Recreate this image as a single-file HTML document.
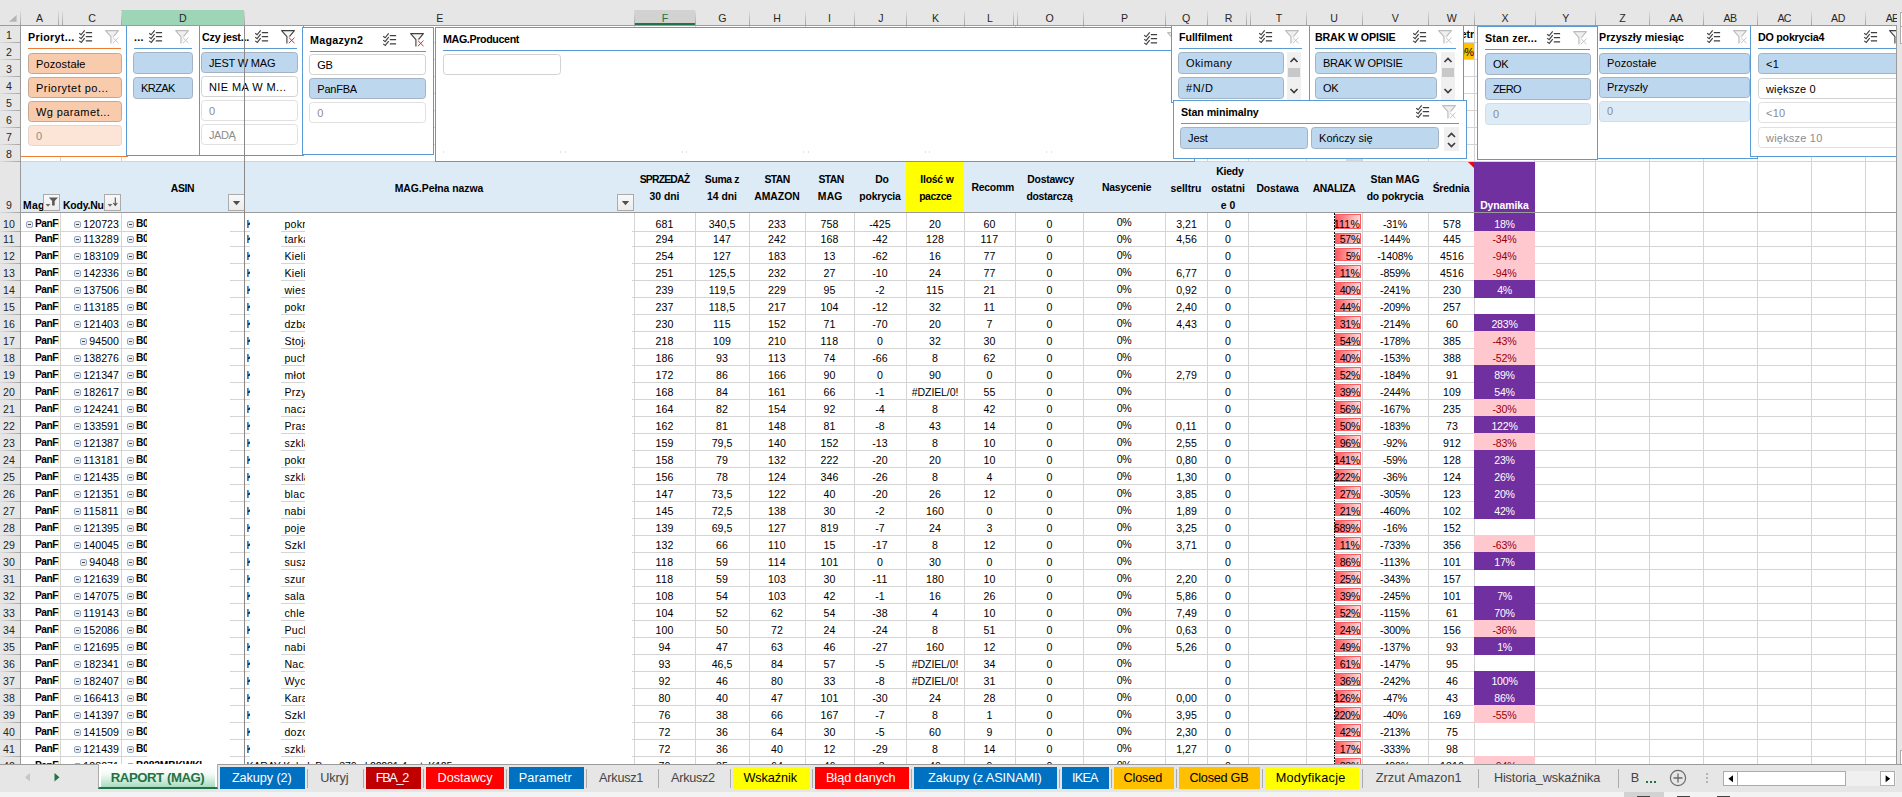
<!DOCTYPE html>
<html lang="pl"><head><meta charset="utf-8"><title>RAPORT (MAG)</title>
<style>
html,body{margin:0;padding:0}
body{width:1902px;height:797px;overflow:hidden;background:#e6e6e6;font-family:"Liberation Sans",sans-serif;font-size:10.6px;color:#000;position:relative}
#app{position:absolute;left:0;top:0;width:1902px;height:797px;overflow:hidden;background:#e6e6e6}
#app div{position:absolute;box-sizing:border-box;white-space:nowrap}
.c{text-align:center;overflow:hidden}
.r{text-align:right;overflow:hidden}
.l{text-align:left;overflow:hidden}
.b{font-weight:bold}
.hl,.vl{background:#d4d4d4}
.ch{color:#262626;font-size:10.6px;text-align:center;line-height:15px}
.rh{color:#262626;font-size:10.6px;text-align:center}
.hd{font-weight:bold;text-align:center;font-size:10.4px;overflow:hidden}
.slh{font-weight:bold;font-size:10.7px;line-height:14px;overflow:hidden}
.sb{border:1px solid #a3b3c4;border-radius:3.5px;background:#bdd7ee;font-size:11px;padding-left:7px;overflow:hidden}
.sb.w{background:#fff;border-color:#d2d2d2}
.sb.g{background:#fff;border-color:#e0e0e0;color:#8c8c8c}
.sb.lb{background:#ddebf7;border-color:#d3dde8;color:#8c8c8c}
.sb.o{background:#f8cbad;border-color:#c4a896}
.sb.lo{background:#fce4d6;border-color:#e4d6ce;color:#8c8c8c}
.tab{font-size:12.7px;line-height:21px;text-align:center;color:#fff;overflow:hidden}
.tsep{background:#ababab}
.mb{border:1px solid #93a5c4;border-radius:2px;background:#ebebeb}
.mb i{position:absolute;left:1px;top:2px;width:3px;height:1px;background:#444;display:block}
.dd{background:#fff;border:1px solid #ababab}
svg{position:absolute;overflow:visible}

</style></head><body><div id="app">
<div style="left:21px;top:26px;width:1875px;height:738px;background:#fff"></div>
<div style="left:21px;top:161px;width:1453px;height:51px;background:#ddebf7"></div>
<div style="left:906px;top:161px;width:58px;height:51px;background:#ffff00"></div>
<div style="left:1474px;top:161px;width:61px;height:51px;background:#7030a0"></div>
<div class="hl" style="left:21px;top:231px;width:1875px;height:1px;"></div>
<div class="hl" style="left:21px;top:246px;width:1875px;height:1px;"></div>
<div class="hl" style="left:21px;top:263px;width:1875px;height:1px;"></div>
<div class="hl" style="left:21px;top:280px;width:1875px;height:1px;"></div>
<div class="hl" style="left:21px;top:297px;width:1875px;height:1px;"></div>
<div class="hl" style="left:21px;top:314px;width:1875px;height:1px;"></div>
<div class="hl" style="left:21px;top:331px;width:1875px;height:1px;"></div>
<div class="hl" style="left:21px;top:348px;width:1875px;height:1px;"></div>
<div class="hl" style="left:21px;top:365px;width:1875px;height:1px;"></div>
<div class="hl" style="left:21px;top:382px;width:1875px;height:1px;"></div>
<div class="hl" style="left:21px;top:399px;width:1875px;height:1px;"></div>
<div class="hl" style="left:21px;top:416px;width:1875px;height:1px;"></div>
<div class="hl" style="left:21px;top:433px;width:1875px;height:1px;"></div>
<div class="hl" style="left:21px;top:450px;width:1875px;height:1px;"></div>
<div class="hl" style="left:21px;top:467px;width:1875px;height:1px;"></div>
<div class="hl" style="left:21px;top:484px;width:1875px;height:1px;"></div>
<div class="hl" style="left:21px;top:501px;width:1875px;height:1px;"></div>
<div class="hl" style="left:21px;top:518px;width:1875px;height:1px;"></div>
<div class="hl" style="left:21px;top:535px;width:1875px;height:1px;"></div>
<div class="hl" style="left:21px;top:552px;width:1875px;height:1px;"></div>
<div class="hl" style="left:21px;top:569px;width:1875px;height:1px;"></div>
<div class="hl" style="left:21px;top:586px;width:1875px;height:1px;"></div>
<div class="hl" style="left:21px;top:603px;width:1875px;height:1px;"></div>
<div class="hl" style="left:21px;top:620px;width:1875px;height:1px;"></div>
<div class="hl" style="left:21px;top:637px;width:1875px;height:1px;"></div>
<div class="hl" style="left:21px;top:654px;width:1875px;height:1px;"></div>
<div class="hl" style="left:21px;top:671px;width:1875px;height:1px;"></div>
<div class="hl" style="left:21px;top:688px;width:1875px;height:1px;"></div>
<div class="hl" style="left:21px;top:705px;width:1875px;height:1px;"></div>
<div class="hl" style="left:21px;top:722px;width:1875px;height:1px;"></div>
<div class="hl" style="left:21px;top:739px;width:1875px;height:1px;"></div>
<div class="hl" style="left:21px;top:756px;width:1875px;height:1px;"></div>
<div class="hl" style="left:21px;top:42px;width:1875px;height:1px;"></div>
<div class="hl" style="left:21px;top:59px;width:1875px;height:1px;"></div>
<div class="hl" style="left:21px;top:76px;width:1875px;height:1px;"></div>
<div class="hl" style="left:21px;top:93px;width:1875px;height:1px;"></div>
<div class="hl" style="left:21px;top:110px;width:1875px;height:1px;"></div>
<div class="hl" style="left:21px;top:127px;width:1875px;height:1px;"></div>
<div class="hl" style="left:21px;top:144px;width:1875px;height:1px;"></div>
<div class="hl" style="left:21px;top:161px;width:1875px;height:1px;"></div>
<div class="vl" style="left:60px;top:26px;width:1px;height:136px;"></div>
<div class="vl" style="left:60px;top:213px;width:1px;height:551px;"></div>
<div class="vl" style="left:121px;top:26px;width:1px;height:136px;"></div>
<div class="vl" style="left:121px;top:213px;width:1px;height:551px;"></div>
<div class="vl" style="left:244px;top:26px;width:1px;height:136px;"></div>
<div class="vl" style="left:244px;top:213px;width:1px;height:551px;"></div>
<div class="vl" style="left:634px;top:26px;width:1px;height:136px;"></div>
<div class="vl" style="left:634px;top:213px;width:1px;height:551px;"></div>
<div class="vl" style="left:695px;top:26px;width:1px;height:136px;"></div>
<div class="vl" style="left:695px;top:213px;width:1px;height:551px;"></div>
<div class="vl" style="left:749px;top:26px;width:1px;height:136px;"></div>
<div class="vl" style="left:749px;top:213px;width:1px;height:551px;"></div>
<div class="vl" style="left:805px;top:26px;width:1px;height:136px;"></div>
<div class="vl" style="left:805px;top:213px;width:1px;height:551px;"></div>
<div class="vl" style="left:854px;top:26px;width:1px;height:136px;"></div>
<div class="vl" style="left:854px;top:213px;width:1px;height:551px;"></div>
<div class="vl" style="left:906px;top:26px;width:1px;height:136px;"></div>
<div class="vl" style="left:906px;top:213px;width:1px;height:551px;"></div>
<div class="vl" style="left:964px;top:26px;width:1px;height:136px;"></div>
<div class="vl" style="left:964px;top:213px;width:1px;height:551px;"></div>
<div class="vl" style="left:1015px;top:26px;width:1px;height:136px;"></div>
<div class="vl" style="left:1015px;top:213px;width:1px;height:551px;"></div>
<div class="vl" style="left:1083px;top:26px;width:1px;height:136px;"></div>
<div class="vl" style="left:1083px;top:213px;width:1px;height:551px;"></div>
<div class="vl" style="left:1165px;top:26px;width:1px;height:136px;"></div>
<div class="vl" style="left:1165px;top:213px;width:1px;height:551px;"></div>
<div class="vl" style="left:1207px;top:26px;width:1px;height:136px;"></div>
<div class="vl" style="left:1207px;top:213px;width:1px;height:551px;"></div>
<div class="vl" style="left:1248px;top:26px;width:1px;height:136px;"></div>
<div class="vl" style="left:1248px;top:213px;width:1px;height:551px;"></div>
<div class="vl" style="left:1306px;top:26px;width:1px;height:136px;"></div>
<div class="vl" style="left:1306px;top:213px;width:1px;height:551px;"></div>
<div class="vl" style="left:1362px;top:26px;width:1px;height:136px;"></div>
<div class="vl" style="left:1362px;top:213px;width:1px;height:551px;"></div>
<div class="vl" style="left:1428px;top:26px;width:1px;height:136px;"></div>
<div class="vl" style="left:1428px;top:213px;width:1px;height:551px;"></div>
<div class="vl" style="left:1474px;top:26px;width:1px;height:136px;"></div>
<div class="vl" style="left:1474px;top:213px;width:1px;height:551px;"></div>
<div class="vl" style="left:1534px;top:26px;width:1px;height:136px;"></div>
<div class="vl" style="left:1534px;top:213px;width:1px;height:551px;"></div>
<div class="vl" style="left:1595px;top:26px;width:1px;height:136px;"></div>
<div class="vl" style="left:1595px;top:213px;width:1px;height:551px;"></div>
<div class="vl" style="left:1595px;top:162px;width:1px;height:50px;"></div>
<div class="vl" style="left:1649px;top:26px;width:1px;height:136px;"></div>
<div class="vl" style="left:1649px;top:213px;width:1px;height:551px;"></div>
<div class="vl" style="left:1649px;top:162px;width:1px;height:50px;"></div>
<div class="vl" style="left:1703px;top:26px;width:1px;height:136px;"></div>
<div class="vl" style="left:1703px;top:213px;width:1px;height:551px;"></div>
<div class="vl" style="left:1703px;top:162px;width:1px;height:50px;"></div>
<div class="vl" style="left:1757px;top:26px;width:1px;height:136px;"></div>
<div class="vl" style="left:1757px;top:213px;width:1px;height:551px;"></div>
<div class="vl" style="left:1757px;top:162px;width:1px;height:50px;"></div>
<div class="vl" style="left:1811px;top:26px;width:1px;height:136px;"></div>
<div class="vl" style="left:1811px;top:213px;width:1px;height:551px;"></div>
<div class="vl" style="left:1811px;top:162px;width:1px;height:50px;"></div>
<div class="vl" style="left:1865px;top:26px;width:1px;height:136px;"></div>
<div class="vl" style="left:1865px;top:213px;width:1px;height:551px;"></div>
<div class="vl" style="left:1865px;top:162px;width:1px;height:50px;"></div>
<div style="left:1429px;top:27px;width:45px;height:15px;font-weight:bold;line-height:15px;text-align:right;overflow:hidden;letter-spacing:-0.11px;">Parametr</div>
<div style="left:1429px;top:43px;width:45px;height:16px;background:#ffc000;line-height:19px;text-align:right;overflow:hidden">30%</div>
<div class="hd" style="left:111px;top:181.05px;width:143px;height:16.7px;line-height:16.7px;letter-spacing:-0.34px;">ASIN</div>
<div class="hd" style="left:234px;top:181.05px;width:410px;height:16.7px;line-height:16.7px;letter-spacing:-0.02px;">MAG.Pełna nazwa</div>
<div class="hd" style="left:624px;top:171.9px;width:81px;height:16.7px;line-height:16.7px;letter-spacing:-0.81px;">SPRZEDAŻ</div>
<div class="hd" style="left:624px;top:188.6px;width:81px;height:16.7px;line-height:16.7px;">30 dni</div>
<div class="hd" style="left:685px;top:171.9px;width:74px;height:16.7px;line-height:16.7px;letter-spacing:-0.32px;">Suma z</div>
<div class="hd" style="left:685px;top:188.6px;width:74px;height:16.7px;line-height:16.7px;">14 dni</div>
<div class="hd" style="left:739px;top:171.9px;width:76px;height:16.7px;line-height:16.7px;letter-spacing:-0.60px;">STAN</div>
<div class="hd" style="left:739px;top:188.6px;width:76px;height:16.7px;line-height:16.7px;">AMAZON</div>
<div class="hd" style="left:796.5px;top:171.9px;width:69px;height:16.7px;line-height:16.7px;letter-spacing:-0.60px;">STAN</div>
<div class="hd" style="left:795.7px;top:188.6px;width:69px;height:16.7px;line-height:16.7px;letter-spacing:0.14px;">MAG</div>
<div class="hd" style="left:846px;top:171.9px;width:72px;height:16.7px;line-height:16.7px;letter-spacing:-0.08px;">Do</div>
<div class="hd" style="left:844px;top:188.6px;width:72px;height:16.7px;line-height:16.7px;letter-spacing:-0.17px;">pokrycia</div>
<div class="hd" style="left:897.9px;top:171.9px;width:78px;height:16.7px;line-height:16.7px;letter-spacing:-0.20px;">Ilość w</div>
<div class="hd" style="left:896.3px;top:188.6px;width:78px;height:16.7px;line-height:16.7px;letter-spacing:-0.41px;">paczce</div>
<div class="hd" style="left:957.2px;top:180.25px;width:71px;height:16.7px;line-height:16.7px;letter-spacing:-0.22px;">Recomm</div>
<div class="hd" style="left:1007.2px;top:171.9px;width:87px;height:16.7px;line-height:16.7px;letter-spacing:-0.19px;">Dostawcy</div>
<div class="hd" style="left:1006px;top:188.6px;width:87px;height:16.7px;line-height:16.7px;letter-spacing:-0.26px;">dostarczą</div>
<div class="hd" style="left:1075.7px;top:180.25px;width:102px;height:16.7px;line-height:16.7px;letter-spacing:-0.24px;">Nasycenie</div>
<div class="hd" style="left:1155px;top:181.05px;width:62px;height:16.7px;line-height:16.7px;letter-spacing:-0.05px;">selltru</div>
<div class="hd" style="left:1198.9px;top:162.95px;width:62px;height:17.1px;line-height:17.1px;letter-spacing:-0.25px;">Kiedy</div>
<div class="hd" style="left:1197px;top:180.05px;width:62px;height:17.1px;line-height:17.1px;letter-spacing:-0.05px;">ostatni</div>
<div class="hd" style="left:1197px;top:197.15px;width:62px;height:17.1px;line-height:17.1px;">e 0</div>
<div class="hd" style="left:1239px;top:181.05px;width:77px;height:16.7px;line-height:16.7px;letter-spacing:-0.07px;">Dostawa</div>
<div class="hd" style="left:1296px;top:181.05px;width:76px;height:16.7px;line-height:16.7px;letter-spacing:-0.42px;">ANALIZA</div>
<div class="hd" style="left:1352px;top:171.9px;width:86px;height:16.7px;line-height:16.7px;letter-spacing:-0.10px;">Stan MAG</div>
<div class="hd" style="left:1352px;top:188.6px;width:86px;height:16.7px;line-height:16.7px;letter-spacing:-0.15px;">do pokrycia</div>
<div class="hd" style="left:1418px;top:181.05px;width:66px;height:16.7px;line-height:16.7px;letter-spacing:-0.20px;">Średnia</div>
<div class="hd" style="left:1464px;top:197.9px;width:81px;height:16.7px;color:#fff;line-height:16.7px;letter-spacing:-0.05px;">Dynamika</div>
<div style="left:23px;top:198.2px;width:22px;height:16px;font-weight:bold;font-size:10.4px;line-height:16px;overflow:hidden;letter-spacing:0.27px;">Mag</div>
<div style="left:63px;top:198.2px;width:42px;height:16px;font-weight:bold;font-size:10.4px;line-height:16px;overflow:hidden;letter-spacing:-0.17px;">Kody.Nu</div>
<div class="dd" style="left:43px;top:194px;width:17px;height:17px;background:linear-gradient(#f8f8f8,#ececec);"><svg width="17" height="17" viewBox="0 0 17 17" style="left:-1px;top:-1px"><path d="M2.6 10h4.8l-2.4 2.8z" fill="#6a6a6a"/><path d="M5.8 3.6h9.2l-3.3 3.3v4.6h-2.6v-4.6z" fill="#5a5a5a"/></svg></div>
<div class="dd" style="left:104px;top:194px;width:17px;height:17px;background:linear-gradient(#f8f8f8,#ececec);"><svg width="17" height="17" viewBox="0 0 17 17" style="left:-1px;top:-1px"><path d="M3.6 10h4.8l-2.4 2.8z" fill="#6a6a6a"/><path d="M11.3 3.6v7.6M9.3 9l2 2.3 2-2.3" stroke="#505050" stroke-width="1.1" fill="none"/></svg></div>
<div class="dd" style="left:228px;top:194px;width:17px;height:17px;background:linear-gradient(#f8f8f8,#ececec);"><svg width="17" height="17" viewBox="0 0 17 17" style="left:-1px;top:-1px"><path d="M4.8 7h7.4l-3.7 4.2z" fill="#505050"/></svg></div>
<div class="dd" style="left:617px;top:194px;width:17px;height:17px;background:linear-gradient(#f8f8f8,#ececec);"><svg width="17" height="17" viewBox="0 0 17 17" style="left:-1px;top:-1px"><path d="M4.8 7h7.4l-3.7 4.2z" fill="#505050"/></svg></div>
<svg width="6" height="6" viewBox="0 0 6 6" style="left:1468px;top:162px"><path d="M0 0h6v6z" fill="#ff0000"/></svg>
<div class="mb" style="left:26px;top:220.5px;width:7px;height:7px;"><i></i></div>
<div class="l" style="left:35px;top:217px;width:24px;height:14px;line-height:14px;font-size:10.2px;font-weight:bold;letter-spacing:-0.44px;">PanFBA</div>
<div class="r" style="left:62px;top:217px;width:57px;height:14px;line-height:14px;letter-spacing:0.05px;">120723</div>
<div class="mb" style="left:74px;top:220.5px;width:7px;height:7px;"><i></i></div>
<div class="mb" style="left:127px;top:220.5px;width:7px;height:7px;"><i></i></div>
<div class="l" style="left:136px;top:217px;width:11px;height:14px;line-height:14px;font-size:10.2px;font-weight:bold;letter-spacing:-0.26px;">B0</div>
<div class="l" style="left:246.5px;top:217px;width:3.5px;height:14px;line-height:14px;letter-spacing:-0.98px;">K</div>
<div class="l" style="left:284.4px;top:217px;width:20.6px;height:14px;line-height:14px;letter-spacing:0.19px;letter-spacing:0.3px;">pokrywka</div>
<div class="c" style="left:634px;top:217px;width:61px;height:14px;line-height:14px;letter-spacing:0.05px;">681</div>
<div class="c" style="left:695px;top:217px;width:54px;height:14px;line-height:14px;letter-spacing:0.04px;">340,5</div>
<div class="c" style="left:749px;top:217px;width:56px;height:14px;line-height:14px;letter-spacing:0.05px;">233</div>
<div class="c" style="left:805px;top:217px;width:49px;height:14px;line-height:14px;letter-spacing:0.05px;">758</div>
<div class="c" style="left:854px;top:217px;width:52px;height:14px;line-height:14px;letter-spacing:0.05px;">-425</div>
<div class="c" style="left:906px;top:217px;width:58px;height:14px;line-height:14px;letter-spacing:0.05px;">20</div>
<div class="c" style="left:964px;top:217px;width:51px;height:14px;line-height:14px;letter-spacing:0.05px;">60</div>
<div class="c" style="left:1016px;top:217px;width:67px;height:14px;line-height:14px;letter-spacing:0.05px;">0</div>
<div class="c" style="left:1083px;top:214.7px;width:82px;height:14px;line-height:14px;letter-spacing:-0.49px;">0%</div>
<div class="c" style="left:1165px;top:217px;width:43px;height:14px;line-height:14px;letter-spacing:0.03px;">3,21</div>
<div class="c" style="left:1207px;top:217px;width:42px;height:14px;line-height:14px;letter-spacing:0.05px;">0</div>
<div style="left:1334px;top:213px;width:1px;height:18px;background:repeating-linear-gradient(#000 0,#000 2px,#fff 2px,#fff 3px)"></div>
<div style="left:1335px;top:214px;width:26px;height:15px;border:1px solid #ff5a5f;background:linear-gradient(90deg,#ff5a5f,#ffdcdd)"></div>
<div class="r" style="left:1302px;top:217px;width:58px;height:14px;line-height:14px;letter-spacing:0.17px;">111%</div>
<div class="c" style="left:1362px;top:217px;width:66px;height:14px;line-height:14px;letter-spacing:-0.22px;">-31%</div>
<div class="c" style="left:1429px;top:217px;width:46px;height:14px;line-height:14px;letter-spacing:0.05px;">578</div>
<div style="left:1474px;top:212px;width:61px;height:20px;background:#7030a0"></div>
<div class="c" style="left:1474px;top:217px;width:61px;height:14px;line-height:14px;letter-spacing:-0.31px;color:#fff;">18%</div>
<div class="l" style="left:35px;top:232px;width:24px;height:14px;line-height:14px;font-size:10.2px;font-weight:bold;letter-spacing:-0.44px;">PanFBA</div>
<div class="r" style="left:62px;top:232px;width:57px;height:14px;line-height:14px;letter-spacing:0.18px;">113289</div>
<div class="mb" style="left:74px;top:235.5px;width:7px;height:7px;"><i></i></div>
<div class="mb" style="left:127px;top:235.5px;width:7px;height:7px;"><i></i></div>
<div class="l" style="left:136px;top:232px;width:11px;height:14px;line-height:14px;font-size:10.2px;font-weight:bold;letter-spacing:-0.26px;">B0</div>
<div class="l" style="left:246.5px;top:232px;width:3.5px;height:14px;line-height:14px;letter-spacing:-0.98px;">K</div>
<div class="l" style="left:284.4px;top:232px;width:20.6px;height:14px;line-height:14px;letter-spacing:0.14px;letter-spacing:0.3px;">tarka</div>
<div class="c" style="left:634px;top:232px;width:61px;height:14px;line-height:14px;letter-spacing:0.05px;">294</div>
<div class="c" style="left:695px;top:232px;width:54px;height:14px;line-height:14px;letter-spacing:0.05px;">147</div>
<div class="c" style="left:749px;top:232px;width:56px;height:14px;line-height:14px;letter-spacing:0.05px;">242</div>
<div class="c" style="left:805px;top:232px;width:49px;height:14px;line-height:14px;letter-spacing:0.05px;">168</div>
<div class="c" style="left:854px;top:232px;width:52px;height:14px;line-height:14px;letter-spacing:0.05px;">-42</div>
<div class="c" style="left:906px;top:232px;width:58px;height:14px;line-height:14px;letter-spacing:0.05px;">128</div>
<div class="c" style="left:964px;top:232px;width:51px;height:14px;line-height:14px;letter-spacing:0.31px;">117</div>
<div class="c" style="left:1016px;top:232px;width:67px;height:14px;line-height:14px;letter-spacing:0.05px;">0</div>
<div class="c" style="left:1083px;top:231.7px;width:82px;height:14px;line-height:14px;letter-spacing:-0.49px;">0%</div>
<div class="c" style="left:1165px;top:232px;width:43px;height:14px;line-height:14px;letter-spacing:0.03px;">4,56</div>
<div class="c" style="left:1207px;top:232px;width:42px;height:14px;line-height:14px;letter-spacing:0.05px;">0</div>
<div style="left:1334px;top:232px;width:1px;height:14px;background:repeating-linear-gradient(#000 0,#000 2px,#fff 2px,#fff 3px)"></div>
<div style="left:1335px;top:233px;width:26px;height:11px;border:1px solid #ff5a5f;background:linear-gradient(90deg,#ff5a5f,#ffdcdd)"></div>
<div class="r" style="left:1302px;top:232px;width:58px;height:14px;line-height:14px;letter-spacing:-0.31px;">57%</div>
<div class="c" style="left:1362px;top:232px;width:66px;height:14px;line-height:14px;letter-spacing:-0.17px;">-144%</div>
<div class="c" style="left:1429px;top:232px;width:46px;height:14px;line-height:14px;letter-spacing:0.05px;">445</div>
<div style="left:1474px;top:231px;width:61px;height:16px;background:#ffc7ce"></div>
<div class="c" style="left:1474px;top:232px;width:61px;height:14px;line-height:14px;letter-spacing:-0.22px;color:#9c0006;">-34%</div>
<div class="l" style="left:35px;top:249px;width:24px;height:14px;line-height:14px;font-size:10.2px;font-weight:bold;letter-spacing:-0.44px;">PanFBA</div>
<div class="r" style="left:62px;top:249px;width:57px;height:14px;line-height:14px;letter-spacing:0.05px;">183109</div>
<div class="mb" style="left:74px;top:252.5px;width:7px;height:7px;"><i></i></div>
<div class="mb" style="left:127px;top:252.5px;width:7px;height:7px;"><i></i></div>
<div class="l" style="left:136px;top:249px;width:11px;height:14px;line-height:14px;font-size:10.2px;font-weight:bold;letter-spacing:-0.26px;">B0</div>
<div class="l" style="left:246.5px;top:249px;width:3.5px;height:14px;line-height:14px;letter-spacing:-0.98px;">K</div>
<div class="l" style="left:284.4px;top:249px;width:20.6px;height:14px;line-height:14px;letter-spacing:-0.13px;letter-spacing:0.3px;">Kieliszki</div>
<div class="c" style="left:634px;top:249px;width:61px;height:14px;line-height:14px;letter-spacing:0.05px;">254</div>
<div class="c" style="left:695px;top:249px;width:54px;height:14px;line-height:14px;letter-spacing:0.05px;">127</div>
<div class="c" style="left:749px;top:249px;width:56px;height:14px;line-height:14px;letter-spacing:0.05px;">183</div>
<div class="c" style="left:805px;top:249px;width:49px;height:14px;line-height:14px;letter-spacing:0.05px;">13</div>
<div class="c" style="left:854px;top:249px;width:52px;height:14px;line-height:14px;letter-spacing:0.05px;">-62</div>
<div class="c" style="left:906px;top:249px;width:58px;height:14px;line-height:14px;letter-spacing:0.05px;">16</div>
<div class="c" style="left:964px;top:249px;width:51px;height:14px;line-height:14px;letter-spacing:0.05px;">77</div>
<div class="c" style="left:1016px;top:249px;width:67px;height:14px;line-height:14px;letter-spacing:0.05px;">0</div>
<div class="c" style="left:1083px;top:247.7px;width:82px;height:14px;line-height:14px;letter-spacing:-0.49px;">0%</div>
<div class="c" style="left:1207px;top:249px;width:42px;height:14px;line-height:14px;letter-spacing:0.05px;">0</div>
<div style="left:1334px;top:247px;width:1px;height:16px;background:repeating-linear-gradient(#000 0,#000 2px,#fff 2px,#fff 3px)"></div>
<div style="left:1335px;top:248px;width:26px;height:13px;border:1px solid #ff5a5f;background:linear-gradient(90deg,#ff5a5f,#ffdcdd)"></div>
<div class="r" style="left:1302px;top:249px;width:58px;height:14px;line-height:14px;letter-spacing:-0.49px;">5%</div>
<div class="c" style="left:1362px;top:249px;width:66px;height:14px;line-height:14px;letter-spacing:-0.13px;">-1408%</div>
<div class="c" style="left:1429px;top:249px;width:46px;height:14px;line-height:14px;letter-spacing:0.05px;">4516</div>
<div style="left:1474px;top:246px;width:61px;height:18px;background:#ffc7ce"></div>
<div class="c" style="left:1474px;top:249px;width:61px;height:14px;line-height:14px;letter-spacing:-0.22px;color:#9c0006;">-94%</div>
<div class="l" style="left:35px;top:266px;width:24px;height:14px;line-height:14px;font-size:10.2px;font-weight:bold;letter-spacing:-0.44px;">PanFBA</div>
<div class="r" style="left:62px;top:266px;width:57px;height:14px;line-height:14px;letter-spacing:0.05px;">142336</div>
<div class="mb" style="left:74px;top:269.5px;width:7px;height:7px;"><i></i></div>
<div class="mb" style="left:127px;top:269.5px;width:7px;height:7px;"><i></i></div>
<div class="l" style="left:136px;top:266px;width:11px;height:14px;line-height:14px;font-size:10.2px;font-weight:bold;letter-spacing:-0.26px;">B0</div>
<div class="l" style="left:246.5px;top:266px;width:3.5px;height:14px;line-height:14px;letter-spacing:-0.98px;">K</div>
<div class="l" style="left:284.4px;top:266px;width:20.6px;height:14px;line-height:14px;letter-spacing:-0.13px;letter-spacing:0.3px;">Kieliszki</div>
<div class="c" style="left:634px;top:266px;width:61px;height:14px;line-height:14px;letter-spacing:0.05px;">251</div>
<div class="c" style="left:695px;top:266px;width:54px;height:14px;line-height:14px;letter-spacing:0.04px;">125,5</div>
<div class="c" style="left:749px;top:266px;width:56px;height:14px;line-height:14px;letter-spacing:0.05px;">232</div>
<div class="c" style="left:805px;top:266px;width:49px;height:14px;line-height:14px;letter-spacing:0.05px;">27</div>
<div class="c" style="left:854px;top:266px;width:52px;height:14px;line-height:14px;letter-spacing:0.05px;">-10</div>
<div class="c" style="left:906px;top:266px;width:58px;height:14px;line-height:14px;letter-spacing:0.05px;">24</div>
<div class="c" style="left:964px;top:266px;width:51px;height:14px;line-height:14px;letter-spacing:0.05px;">77</div>
<div class="c" style="left:1016px;top:266px;width:67px;height:14px;line-height:14px;letter-spacing:0.05px;">0</div>
<div class="c" style="left:1083px;top:264.7px;width:82px;height:14px;line-height:14px;letter-spacing:-0.49px;">0%</div>
<div class="c" style="left:1165px;top:266px;width:43px;height:14px;line-height:14px;letter-spacing:0.03px;">6,77</div>
<div class="c" style="left:1207px;top:266px;width:42px;height:14px;line-height:14px;letter-spacing:0.05px;">0</div>
<div style="left:1334px;top:264px;width:1px;height:16px;background:repeating-linear-gradient(#000 0,#000 2px,#fff 2px,#fff 3px)"></div>
<div style="left:1335px;top:265px;width:26px;height:13px;border:1px solid #ff5a5f;background:linear-gradient(90deg,#ff5a5f,#ffdcdd)"></div>
<div class="r" style="left:1302px;top:266px;width:58px;height:14px;line-height:14px;letter-spacing:-0.05px;">11%</div>
<div class="c" style="left:1362px;top:266px;width:66px;height:14px;line-height:14px;letter-spacing:-0.17px;">-859%</div>
<div class="c" style="left:1429px;top:266px;width:46px;height:14px;line-height:14px;letter-spacing:0.05px;">4516</div>
<div style="left:1474px;top:263px;width:61px;height:18px;background:#ffc7ce"></div>
<div class="c" style="left:1474px;top:266px;width:61px;height:14px;line-height:14px;letter-spacing:-0.22px;color:#9c0006;">-94%</div>
<div class="l" style="left:35px;top:283px;width:24px;height:14px;line-height:14px;font-size:10.2px;font-weight:bold;letter-spacing:-0.44px;">PanFBA</div>
<div class="r" style="left:62px;top:283px;width:57px;height:14px;line-height:14px;letter-spacing:0.05px;">137506</div>
<div class="mb" style="left:74px;top:286.5px;width:7px;height:7px;"><i></i></div>
<div class="mb" style="left:127px;top:286.5px;width:7px;height:7px;"><i></i></div>
<div class="l" style="left:136px;top:283px;width:11px;height:14px;line-height:14px;font-size:10.2px;font-weight:bold;letter-spacing:-0.26px;">B0</div>
<div class="l" style="left:246.5px;top:283px;width:3.5px;height:14px;line-height:14px;letter-spacing:-0.98px;">K</div>
<div class="l" style="left:284.4px;top:283px;width:20.6px;height:14px;line-height:14px;letter-spacing:-0.13px;letter-spacing:0.3px;">wieszak</div>
<div class="c" style="left:634px;top:283px;width:61px;height:14px;line-height:14px;letter-spacing:0.05px;">239</div>
<div class="c" style="left:695px;top:283px;width:54px;height:14px;line-height:14px;letter-spacing:0.19px;">119,5</div>
<div class="c" style="left:749px;top:283px;width:56px;height:14px;line-height:14px;letter-spacing:0.05px;">229</div>
<div class="c" style="left:805px;top:283px;width:49px;height:14px;line-height:14px;letter-spacing:0.05px;">95</div>
<div class="c" style="left:854px;top:283px;width:52px;height:14px;line-height:14px;letter-spacing:0.06px;">-2</div>
<div class="c" style="left:906px;top:283px;width:58px;height:14px;line-height:14px;letter-spacing:0.31px;">115</div>
<div class="c" style="left:964px;top:283px;width:51px;height:14px;line-height:14px;letter-spacing:0.05px;">21</div>
<div class="c" style="left:1016px;top:283px;width:67px;height:14px;line-height:14px;letter-spacing:0.05px;">0</div>
<div class="c" style="left:1083px;top:281.7px;width:82px;height:14px;line-height:14px;letter-spacing:-0.49px;">0%</div>
<div class="c" style="left:1165px;top:283px;width:43px;height:14px;line-height:14px;letter-spacing:0.03px;">0,92</div>
<div class="c" style="left:1207px;top:283px;width:42px;height:14px;line-height:14px;letter-spacing:0.05px;">0</div>
<div style="left:1334px;top:281px;width:1px;height:16px;background:repeating-linear-gradient(#000 0,#000 2px,#fff 2px,#fff 3px)"></div>
<div style="left:1335px;top:282px;width:26px;height:13px;border:1px solid #ff5a5f;background:linear-gradient(90deg,#ff5a5f,#ffdcdd)"></div>
<div class="r" style="left:1302px;top:283px;width:58px;height:14px;line-height:14px;letter-spacing:-0.31px;">40%</div>
<div class="c" style="left:1362px;top:283px;width:66px;height:14px;line-height:14px;letter-spacing:-0.17px;">-241%</div>
<div class="c" style="left:1429px;top:283px;width:46px;height:14px;line-height:14px;letter-spacing:0.05px;">230</div>
<div style="left:1474px;top:280px;width:61px;height:18px;background:#7030a0"></div>
<div class="c" style="left:1474px;top:283px;width:61px;height:14px;line-height:14px;letter-spacing:-0.49px;color:#fff;">4%</div>
<div class="l" style="left:35px;top:300px;width:24px;height:14px;line-height:14px;font-size:10.2px;font-weight:bold;letter-spacing:-0.44px;">PanFBA</div>
<div class="r" style="left:62px;top:300px;width:57px;height:14px;line-height:14px;letter-spacing:0.18px;">113185</div>
<div class="mb" style="left:74px;top:303.5px;width:7px;height:7px;"><i></i></div>
<div class="mb" style="left:127px;top:303.5px;width:7px;height:7px;"><i></i></div>
<div class="l" style="left:136px;top:300px;width:11px;height:14px;line-height:14px;font-size:10.2px;font-weight:bold;letter-spacing:-0.26px;">B0</div>
<div class="l" style="left:246.5px;top:300px;width:3.5px;height:14px;line-height:14px;letter-spacing:-0.98px;">K</div>
<div class="l" style="left:284.4px;top:300px;width:20.6px;height:14px;line-height:14px;letter-spacing:0.19px;letter-spacing:0.3px;">pokrywka</div>
<div class="c" style="left:634px;top:300px;width:61px;height:14px;line-height:14px;letter-spacing:0.05px;">237</div>
<div class="c" style="left:695px;top:300px;width:54px;height:14px;line-height:14px;letter-spacing:0.19px;">118,5</div>
<div class="c" style="left:749px;top:300px;width:56px;height:14px;line-height:14px;letter-spacing:0.05px;">217</div>
<div class="c" style="left:805px;top:300px;width:49px;height:14px;line-height:14px;letter-spacing:0.05px;">104</div>
<div class="c" style="left:854px;top:300px;width:52px;height:14px;line-height:14px;letter-spacing:0.05px;">-12</div>
<div class="c" style="left:906px;top:300px;width:58px;height:14px;line-height:14px;letter-spacing:0.05px;">32</div>
<div class="c" style="left:964px;top:300px;width:51px;height:14px;line-height:14px;letter-spacing:0.44px;">11</div>
<div class="c" style="left:1016px;top:300px;width:67px;height:14px;line-height:14px;letter-spacing:0.05px;">0</div>
<div class="c" style="left:1083px;top:298.7px;width:82px;height:14px;line-height:14px;letter-spacing:-0.49px;">0%</div>
<div class="c" style="left:1165px;top:300px;width:43px;height:14px;line-height:14px;letter-spacing:0.03px;">2,40</div>
<div class="c" style="left:1207px;top:300px;width:42px;height:14px;line-height:14px;letter-spacing:0.05px;">0</div>
<div style="left:1334px;top:298px;width:1px;height:16px;background:repeating-linear-gradient(#000 0,#000 2px,#fff 2px,#fff 3px)"></div>
<div style="left:1335px;top:299px;width:26px;height:13px;border:1px solid #ff5a5f;background:linear-gradient(90deg,#ff5a5f,#ffdcdd)"></div>
<div class="r" style="left:1302px;top:300px;width:58px;height:14px;line-height:14px;letter-spacing:-0.31px;">44%</div>
<div class="c" style="left:1362px;top:300px;width:66px;height:14px;line-height:14px;letter-spacing:-0.17px;">-209%</div>
<div class="c" style="left:1429px;top:300px;width:46px;height:14px;line-height:14px;letter-spacing:0.05px;">257</div>
<div class="l" style="left:35px;top:317px;width:24px;height:14px;line-height:14px;font-size:10.2px;font-weight:bold;letter-spacing:-0.44px;">PanFBA</div>
<div class="r" style="left:62px;top:317px;width:57px;height:14px;line-height:14px;letter-spacing:0.05px;">121403</div>
<div class="mb" style="left:74px;top:320.5px;width:7px;height:7px;"><i></i></div>
<div class="mb" style="left:127px;top:320.5px;width:7px;height:7px;"><i></i></div>
<div class="l" style="left:136px;top:317px;width:11px;height:14px;line-height:14px;font-size:10.2px;font-weight:bold;letter-spacing:-0.26px;">B0</div>
<div class="l" style="left:246.5px;top:317px;width:3.5px;height:14px;line-height:14px;letter-spacing:-0.98px;">K</div>
<div class="l" style="left:284.4px;top:317px;width:20.6px;height:14px;line-height:14px;letter-spacing:-0.02px;letter-spacing:0.3px;">dzbanek</div>
<div class="c" style="left:634px;top:317px;width:61px;height:14px;line-height:14px;letter-spacing:0.05px;">230</div>
<div class="c" style="left:695px;top:317px;width:54px;height:14px;line-height:14px;letter-spacing:0.31px;">115</div>
<div class="c" style="left:749px;top:317px;width:56px;height:14px;line-height:14px;letter-spacing:0.05px;">152</div>
<div class="c" style="left:805px;top:317px;width:49px;height:14px;line-height:14px;letter-spacing:0.05px;">71</div>
<div class="c" style="left:854px;top:317px;width:52px;height:14px;line-height:14px;letter-spacing:0.05px;">-70</div>
<div class="c" style="left:906px;top:317px;width:58px;height:14px;line-height:14px;letter-spacing:0.05px;">20</div>
<div class="c" style="left:964px;top:317px;width:51px;height:14px;line-height:14px;letter-spacing:0.05px;">7</div>
<div class="c" style="left:1016px;top:317px;width:67px;height:14px;line-height:14px;letter-spacing:0.05px;">0</div>
<div class="c" style="left:1083px;top:315.7px;width:82px;height:14px;line-height:14px;letter-spacing:-0.49px;">0%</div>
<div class="c" style="left:1165px;top:317px;width:43px;height:14px;line-height:14px;letter-spacing:0.03px;">4,43</div>
<div class="c" style="left:1207px;top:317px;width:42px;height:14px;line-height:14px;letter-spacing:0.05px;">0</div>
<div style="left:1334px;top:315px;width:1px;height:16px;background:repeating-linear-gradient(#000 0,#000 2px,#fff 2px,#fff 3px)"></div>
<div style="left:1335px;top:316px;width:26px;height:13px;border:1px solid #ff5a5f;background:linear-gradient(90deg,#ff5a5f,#ffdcdd)"></div>
<div class="r" style="left:1302px;top:317px;width:58px;height:14px;line-height:14px;letter-spacing:-0.31px;">31%</div>
<div class="c" style="left:1362px;top:317px;width:66px;height:14px;line-height:14px;letter-spacing:-0.17px;">-214%</div>
<div class="c" style="left:1429px;top:317px;width:46px;height:14px;line-height:14px;letter-spacing:0.05px;">60</div>
<div style="left:1474px;top:314px;width:61px;height:18px;background:#7030a0"></div>
<div class="c" style="left:1474px;top:317px;width:61px;height:14px;line-height:14px;letter-spacing:-0.22px;color:#fff;">283%</div>
<div class="l" style="left:35px;top:334px;width:24px;height:14px;line-height:14px;font-size:10.2px;font-weight:bold;letter-spacing:-0.44px;">PanFBA</div>
<div class="r" style="left:62px;top:334px;width:57px;height:14px;line-height:14px;letter-spacing:0.05px;">94500</div>
<div class="mb" style="left:80px;top:337.5px;width:7px;height:7px;"><i></i></div>
<div class="mb" style="left:127px;top:337.5px;width:7px;height:7px;"><i></i></div>
<div class="l" style="left:136px;top:334px;width:11px;height:14px;line-height:14px;font-size:10.2px;font-weight:bold;letter-spacing:-0.26px;">B0</div>
<div class="l" style="left:246.5px;top:334px;width:3.5px;height:14px;line-height:14px;letter-spacing:-0.98px;">K</div>
<div class="l" style="left:284.4px;top:334px;width:20.6px;height:14px;line-height:14px;letter-spacing:-0.05px;letter-spacing:0.3px;">Stojak</div>
<div class="c" style="left:634px;top:334px;width:61px;height:14px;line-height:14px;letter-spacing:0.05px;">218</div>
<div class="c" style="left:695px;top:334px;width:54px;height:14px;line-height:14px;letter-spacing:0.05px;">109</div>
<div class="c" style="left:749px;top:334px;width:56px;height:14px;line-height:14px;letter-spacing:0.05px;">210</div>
<div class="c" style="left:805px;top:334px;width:49px;height:14px;line-height:14px;letter-spacing:0.31px;">118</div>
<div class="c" style="left:854px;top:334px;width:52px;height:14px;line-height:14px;letter-spacing:0.05px;">0</div>
<div class="c" style="left:906px;top:334px;width:58px;height:14px;line-height:14px;letter-spacing:0.05px;">32</div>
<div class="c" style="left:964px;top:334px;width:51px;height:14px;line-height:14px;letter-spacing:0.05px;">30</div>
<div class="c" style="left:1016px;top:334px;width:67px;height:14px;line-height:14px;letter-spacing:0.05px;">0</div>
<div class="c" style="left:1083px;top:332.7px;width:82px;height:14px;line-height:14px;letter-spacing:-0.49px;">0%</div>
<div class="c" style="left:1207px;top:334px;width:42px;height:14px;line-height:14px;letter-spacing:0.05px;">0</div>
<div style="left:1334px;top:332px;width:1px;height:16px;background:repeating-linear-gradient(#000 0,#000 2px,#fff 2px,#fff 3px)"></div>
<div style="left:1335px;top:333px;width:26px;height:13px;border:1px solid #ff5a5f;background:linear-gradient(90deg,#ff5a5f,#ffdcdd)"></div>
<div class="r" style="left:1302px;top:334px;width:58px;height:14px;line-height:14px;letter-spacing:-0.31px;">54%</div>
<div class="c" style="left:1362px;top:334px;width:66px;height:14px;line-height:14px;letter-spacing:-0.17px;">-178%</div>
<div class="c" style="left:1429px;top:334px;width:46px;height:14px;line-height:14px;letter-spacing:0.05px;">385</div>
<div style="left:1474px;top:331px;width:61px;height:18px;background:#ffc7ce"></div>
<div class="c" style="left:1474px;top:334px;width:61px;height:14px;line-height:14px;letter-spacing:-0.22px;color:#9c0006;">-43%</div>
<div class="l" style="left:35px;top:351px;width:24px;height:14px;line-height:14px;font-size:10.2px;font-weight:bold;letter-spacing:-0.44px;">PanFBA</div>
<div class="r" style="left:62px;top:351px;width:57px;height:14px;line-height:14px;letter-spacing:0.05px;">138276</div>
<div class="mb" style="left:74px;top:354.5px;width:7px;height:7px;"><i></i></div>
<div class="mb" style="left:127px;top:354.5px;width:7px;height:7px;"><i></i></div>
<div class="l" style="left:136px;top:351px;width:11px;height:14px;line-height:14px;font-size:10.2px;font-weight:bold;letter-spacing:-0.26px;">B0</div>
<div class="l" style="left:246.5px;top:351px;width:3.5px;height:14px;line-height:14px;letter-spacing:-0.98px;">K</div>
<div class="l" style="left:284.4px;top:351px;width:20.6px;height:14px;line-height:14px;letter-spacing:0.12px;letter-spacing:0.3px;">puchar</div>
<div class="c" style="left:634px;top:351px;width:61px;height:14px;line-height:14px;letter-spacing:0.05px;">186</div>
<div class="c" style="left:695px;top:351px;width:54px;height:14px;line-height:14px;letter-spacing:0.05px;">93</div>
<div class="c" style="left:749px;top:351px;width:56px;height:14px;line-height:14px;letter-spacing:0.31px;">113</div>
<div class="c" style="left:805px;top:351px;width:49px;height:14px;line-height:14px;letter-spacing:0.05px;">74</div>
<div class="c" style="left:854px;top:351px;width:52px;height:14px;line-height:14px;letter-spacing:0.05px;">-66</div>
<div class="c" style="left:906px;top:351px;width:58px;height:14px;line-height:14px;letter-spacing:0.05px;">8</div>
<div class="c" style="left:964px;top:351px;width:51px;height:14px;line-height:14px;letter-spacing:0.05px;">62</div>
<div class="c" style="left:1016px;top:351px;width:67px;height:14px;line-height:14px;letter-spacing:0.05px;">0</div>
<div class="c" style="left:1083px;top:349.7px;width:82px;height:14px;line-height:14px;letter-spacing:-0.49px;">0%</div>
<div class="c" style="left:1207px;top:351px;width:42px;height:14px;line-height:14px;letter-spacing:0.05px;">0</div>
<div style="left:1334px;top:349px;width:1px;height:16px;background:repeating-linear-gradient(#000 0,#000 2px,#fff 2px,#fff 3px)"></div>
<div style="left:1335px;top:350px;width:26px;height:13px;border:1px solid #ff5a5f;background:linear-gradient(90deg,#ff5a5f,#ffdcdd)"></div>
<div class="r" style="left:1302px;top:351px;width:58px;height:14px;line-height:14px;letter-spacing:-0.31px;">40%</div>
<div class="c" style="left:1362px;top:351px;width:66px;height:14px;line-height:14px;letter-spacing:-0.17px;">-153%</div>
<div class="c" style="left:1429px;top:351px;width:46px;height:14px;line-height:14px;letter-spacing:0.05px;">388</div>
<div style="left:1474px;top:348px;width:61px;height:18px;background:#ffc7ce"></div>
<div class="c" style="left:1474px;top:351px;width:61px;height:14px;line-height:14px;letter-spacing:-0.22px;color:#9c0006;">-52%</div>
<div class="l" style="left:35px;top:368px;width:24px;height:14px;line-height:14px;font-size:10.2px;font-weight:bold;letter-spacing:-0.44px;">PanFBA</div>
<div class="r" style="left:62px;top:368px;width:57px;height:14px;line-height:14px;letter-spacing:0.05px;">121347</div>
<div class="mb" style="left:74px;top:371.5px;width:7px;height:7px;"><i></i></div>
<div class="mb" style="left:127px;top:371.5px;width:7px;height:7px;"><i></i></div>
<div class="l" style="left:136px;top:368px;width:11px;height:14px;line-height:14px;font-size:10.2px;font-weight:bold;letter-spacing:-0.26px;">B0</div>
<div class="l" style="left:246.5px;top:368px;width:3.5px;height:14px;line-height:14px;letter-spacing:-0.98px;">K</div>
<div class="l" style="left:284.4px;top:368px;width:20.6px;height:14px;line-height:14px;letter-spacing:0.37px;letter-spacing:0.3px;">młotek</div>
<div class="c" style="left:634px;top:368px;width:61px;height:14px;line-height:14px;letter-spacing:0.05px;">172</div>
<div class="c" style="left:695px;top:368px;width:54px;height:14px;line-height:14px;letter-spacing:0.05px;">86</div>
<div class="c" style="left:749px;top:368px;width:56px;height:14px;line-height:14px;letter-spacing:0.05px;">166</div>
<div class="c" style="left:805px;top:368px;width:49px;height:14px;line-height:14px;letter-spacing:0.05px;">90</div>
<div class="c" style="left:854px;top:368px;width:52px;height:14px;line-height:14px;letter-spacing:0.05px;">0</div>
<div class="c" style="left:906px;top:368px;width:58px;height:14px;line-height:14px;letter-spacing:0.05px;">90</div>
<div class="c" style="left:964px;top:368px;width:51px;height:14px;line-height:14px;letter-spacing:0.05px;">0</div>
<div class="c" style="left:1016px;top:368px;width:67px;height:14px;line-height:14px;letter-spacing:0.05px;">0</div>
<div class="c" style="left:1083px;top:366.7px;width:82px;height:14px;line-height:14px;letter-spacing:-0.49px;">0%</div>
<div class="c" style="left:1165px;top:368px;width:43px;height:14px;line-height:14px;letter-spacing:0.03px;">2,79</div>
<div class="c" style="left:1207px;top:368px;width:42px;height:14px;line-height:14px;letter-spacing:0.05px;">0</div>
<div style="left:1334px;top:366px;width:1px;height:16px;background:repeating-linear-gradient(#000 0,#000 2px,#fff 2px,#fff 3px)"></div>
<div style="left:1335px;top:367px;width:26px;height:13px;border:1px solid #ff5a5f;background:linear-gradient(90deg,#ff5a5f,#ffdcdd)"></div>
<div class="r" style="left:1302px;top:368px;width:58px;height:14px;line-height:14px;letter-spacing:-0.31px;">52%</div>
<div class="c" style="left:1362px;top:368px;width:66px;height:14px;line-height:14px;letter-spacing:-0.17px;">-184%</div>
<div class="c" style="left:1429px;top:368px;width:46px;height:14px;line-height:14px;letter-spacing:0.05px;">91</div>
<div style="left:1474px;top:365px;width:61px;height:18px;background:#7030a0"></div>
<div class="c" style="left:1474px;top:368px;width:61px;height:14px;line-height:14px;letter-spacing:-0.31px;color:#fff;">89%</div>
<div class="l" style="left:35px;top:385px;width:24px;height:14px;line-height:14px;font-size:10.2px;font-weight:bold;letter-spacing:-0.44px;">PanFBA</div>
<div class="r" style="left:62px;top:385px;width:57px;height:14px;line-height:14px;letter-spacing:0.05px;">182617</div>
<div class="mb" style="left:74px;top:388.5px;width:7px;height:7px;"><i></i></div>
<div class="mb" style="left:127px;top:388.5px;width:7px;height:7px;"><i></i></div>
<div class="l" style="left:136px;top:385px;width:11px;height:14px;line-height:14px;font-size:10.2px;font-weight:bold;letter-spacing:-0.26px;">B0</div>
<div class="l" style="left:246.5px;top:385px;width:3.5px;height:14px;line-height:14px;letter-spacing:-0.98px;">K</div>
<div class="l" style="left:284.4px;top:385px;width:20.6px;height:14px;line-height:14px;letter-spacing:-0.02px;letter-spacing:0.3px;">Przykrywka</div>
<div class="c" style="left:634px;top:385px;width:61px;height:14px;line-height:14px;letter-spacing:0.05px;">168</div>
<div class="c" style="left:695px;top:385px;width:54px;height:14px;line-height:14px;letter-spacing:0.05px;">84</div>
<div class="c" style="left:749px;top:385px;width:56px;height:14px;line-height:14px;letter-spacing:0.05px;">161</div>
<div class="c" style="left:805px;top:385px;width:49px;height:14px;line-height:14px;letter-spacing:0.05px;">66</div>
<div class="c" style="left:854px;top:385px;width:52px;height:14px;line-height:14px;letter-spacing:0.06px;">-1</div>
<div class="c" style="left:906px;top:385px;width:58px;height:14px;line-height:14px;letter-spacing:-0.15px;">#DZIEL/0!</div>
<div class="c" style="left:964px;top:385px;width:51px;height:14px;line-height:14px;letter-spacing:0.05px;">55</div>
<div class="c" style="left:1016px;top:385px;width:67px;height:14px;line-height:14px;letter-spacing:0.05px;">0</div>
<div class="c" style="left:1083px;top:383.7px;width:82px;height:14px;line-height:14px;letter-spacing:-0.49px;">0%</div>
<div class="c" style="left:1207px;top:385px;width:42px;height:14px;line-height:14px;letter-spacing:0.05px;">0</div>
<div style="left:1334px;top:383px;width:1px;height:16px;background:repeating-linear-gradient(#000 0,#000 2px,#fff 2px,#fff 3px)"></div>
<div style="left:1335px;top:384px;width:26px;height:13px;border:1px solid #ff5a5f;background:linear-gradient(90deg,#ff5a5f,#ffdcdd)"></div>
<div class="r" style="left:1302px;top:385px;width:58px;height:14px;line-height:14px;letter-spacing:-0.31px;">39%</div>
<div class="c" style="left:1362px;top:385px;width:66px;height:14px;line-height:14px;letter-spacing:-0.17px;">-244%</div>
<div class="c" style="left:1429px;top:385px;width:46px;height:14px;line-height:14px;letter-spacing:0.05px;">109</div>
<div style="left:1474px;top:382px;width:61px;height:18px;background:#7030a0"></div>
<div class="c" style="left:1474px;top:385px;width:61px;height:14px;line-height:14px;letter-spacing:-0.31px;color:#fff;">54%</div>
<div class="l" style="left:35px;top:402px;width:24px;height:14px;line-height:14px;font-size:10.2px;font-weight:bold;letter-spacing:-0.44px;">PanFBA</div>
<div class="r" style="left:62px;top:402px;width:57px;height:14px;line-height:14px;letter-spacing:0.05px;">124241</div>
<div class="mb" style="left:74px;top:405.5px;width:7px;height:7px;"><i></i></div>
<div class="mb" style="left:127px;top:405.5px;width:7px;height:7px;"><i></i></div>
<div class="l" style="left:136px;top:402px;width:11px;height:14px;line-height:14px;font-size:10.2px;font-weight:bold;letter-spacing:-0.26px;">B0</div>
<div class="l" style="left:246.5px;top:402px;width:3.5px;height:14px;line-height:14px;letter-spacing:-0.98px;">K</div>
<div class="l" style="left:284.4px;top:402px;width:20.6px;height:14px;line-height:14px;letter-spacing:-0.07px;letter-spacing:0.3px;">naczynie</div>
<div class="c" style="left:634px;top:402px;width:61px;height:14px;line-height:14px;letter-spacing:0.05px;">164</div>
<div class="c" style="left:695px;top:402px;width:54px;height:14px;line-height:14px;letter-spacing:0.05px;">82</div>
<div class="c" style="left:749px;top:402px;width:56px;height:14px;line-height:14px;letter-spacing:0.05px;">154</div>
<div class="c" style="left:805px;top:402px;width:49px;height:14px;line-height:14px;letter-spacing:0.05px;">92</div>
<div class="c" style="left:854px;top:402px;width:52px;height:14px;line-height:14px;letter-spacing:0.06px;">-4</div>
<div class="c" style="left:906px;top:402px;width:58px;height:14px;line-height:14px;letter-spacing:0.05px;">8</div>
<div class="c" style="left:964px;top:402px;width:51px;height:14px;line-height:14px;letter-spacing:0.05px;">42</div>
<div class="c" style="left:1016px;top:402px;width:67px;height:14px;line-height:14px;letter-spacing:0.05px;">0</div>
<div class="c" style="left:1083px;top:400.7px;width:82px;height:14px;line-height:14px;letter-spacing:-0.49px;">0%</div>
<div class="c" style="left:1207px;top:402px;width:42px;height:14px;line-height:14px;letter-spacing:0.05px;">0</div>
<div style="left:1334px;top:400px;width:1px;height:16px;background:repeating-linear-gradient(#000 0,#000 2px,#fff 2px,#fff 3px)"></div>
<div style="left:1335px;top:401px;width:26px;height:13px;border:1px solid #ff5a5f;background:linear-gradient(90deg,#ff5a5f,#ffdcdd)"></div>
<div class="r" style="left:1302px;top:402px;width:58px;height:14px;line-height:14px;letter-spacing:-0.31px;">56%</div>
<div class="c" style="left:1362px;top:402px;width:66px;height:14px;line-height:14px;letter-spacing:-0.17px;">-167%</div>
<div class="c" style="left:1429px;top:402px;width:46px;height:14px;line-height:14px;letter-spacing:0.05px;">235</div>
<div style="left:1474px;top:399px;width:61px;height:18px;background:#ffc7ce"></div>
<div class="c" style="left:1474px;top:402px;width:61px;height:14px;line-height:14px;letter-spacing:-0.22px;color:#9c0006;">-30%</div>
<div class="l" style="left:35px;top:419px;width:24px;height:14px;line-height:14px;font-size:10.2px;font-weight:bold;letter-spacing:-0.44px;">PanFBA</div>
<div class="r" style="left:62px;top:419px;width:57px;height:14px;line-height:14px;letter-spacing:0.05px;">133591</div>
<div class="mb" style="left:74px;top:422.5px;width:7px;height:7px;"><i></i></div>
<div class="mb" style="left:127px;top:422.5px;width:7px;height:7px;"><i></i></div>
<div class="l" style="left:136px;top:419px;width:11px;height:14px;line-height:14px;font-size:10.2px;font-weight:bold;letter-spacing:-0.26px;">B0</div>
<div class="l" style="left:246.5px;top:419px;width:3.5px;height:14px;line-height:14px;letter-spacing:-0.98px;">K</div>
<div class="l" style="left:284.4px;top:419px;width:20.6px;height:14px;line-height:14px;letter-spacing:-0.35px;letter-spacing:0.3px;">Praska</div>
<div class="c" style="left:634px;top:419px;width:61px;height:14px;line-height:14px;letter-spacing:0.05px;">162</div>
<div class="c" style="left:695px;top:419px;width:54px;height:14px;line-height:14px;letter-spacing:0.05px;">81</div>
<div class="c" style="left:749px;top:419px;width:56px;height:14px;line-height:14px;letter-spacing:0.05px;">148</div>
<div class="c" style="left:805px;top:419px;width:49px;height:14px;line-height:14px;letter-spacing:0.05px;">81</div>
<div class="c" style="left:854px;top:419px;width:52px;height:14px;line-height:14px;letter-spacing:0.06px;">-8</div>
<div class="c" style="left:906px;top:419px;width:58px;height:14px;line-height:14px;letter-spacing:0.05px;">43</div>
<div class="c" style="left:964px;top:419px;width:51px;height:14px;line-height:14px;letter-spacing:0.05px;">14</div>
<div class="c" style="left:1016px;top:419px;width:67px;height:14px;line-height:14px;letter-spacing:0.05px;">0</div>
<div class="c" style="left:1083px;top:417.7px;width:82px;height:14px;line-height:14px;letter-spacing:-0.49px;">0%</div>
<div class="c" style="left:1165px;top:419px;width:43px;height:14px;line-height:14px;letter-spacing:0.23px;">0,11</div>
<div class="c" style="left:1207px;top:419px;width:42px;height:14px;line-height:14px;letter-spacing:0.05px;">0</div>
<div style="left:1334px;top:417px;width:1px;height:16px;background:repeating-linear-gradient(#000 0,#000 2px,#fff 2px,#fff 3px)"></div>
<div style="left:1335px;top:418px;width:26px;height:13px;border:1px solid #ff5a5f;background:linear-gradient(90deg,#ff5a5f,#ffdcdd)"></div>
<div class="r" style="left:1302px;top:419px;width:58px;height:14px;line-height:14px;letter-spacing:-0.31px;">50%</div>
<div class="c" style="left:1362px;top:419px;width:66px;height:14px;line-height:14px;letter-spacing:-0.17px;">-183%</div>
<div class="c" style="left:1429px;top:419px;width:46px;height:14px;line-height:14px;letter-spacing:0.05px;">73</div>
<div style="left:1474px;top:416px;width:61px;height:18px;background:#7030a0"></div>
<div class="c" style="left:1474px;top:419px;width:61px;height:14px;line-height:14px;letter-spacing:-0.22px;color:#fff;">122%</div>
<div class="l" style="left:35px;top:436px;width:24px;height:14px;line-height:14px;font-size:10.2px;font-weight:bold;letter-spacing:-0.44px;">PanFBA</div>
<div class="r" style="left:62px;top:436px;width:57px;height:14px;line-height:14px;letter-spacing:0.05px;">121387</div>
<div class="mb" style="left:74px;top:439.5px;width:7px;height:7px;"><i></i></div>
<div class="mb" style="left:127px;top:439.5px;width:7px;height:7px;"><i></i></div>
<div class="l" style="left:136px;top:436px;width:11px;height:14px;line-height:14px;font-size:10.2px;font-weight:bold;letter-spacing:-0.26px;">B0</div>
<div class="l" style="left:246.5px;top:436px;width:3.5px;height:14px;line-height:14px;letter-spacing:-0.98px;">K</div>
<div class="l" style="left:284.4px;top:436px;width:20.6px;height:14px;line-height:14px;letter-spacing:-0.09px;letter-spacing:0.3px;">szklanki</div>
<div class="c" style="left:634px;top:436px;width:61px;height:14px;line-height:14px;letter-spacing:0.05px;">159</div>
<div class="c" style="left:695px;top:436px;width:54px;height:14px;line-height:14px;letter-spacing:0.03px;">79,5</div>
<div class="c" style="left:749px;top:436px;width:56px;height:14px;line-height:14px;letter-spacing:0.05px;">140</div>
<div class="c" style="left:805px;top:436px;width:49px;height:14px;line-height:14px;letter-spacing:0.05px;">152</div>
<div class="c" style="left:854px;top:436px;width:52px;height:14px;line-height:14px;letter-spacing:0.05px;">-13</div>
<div class="c" style="left:906px;top:436px;width:58px;height:14px;line-height:14px;letter-spacing:0.05px;">8</div>
<div class="c" style="left:964px;top:436px;width:51px;height:14px;line-height:14px;letter-spacing:0.05px;">10</div>
<div class="c" style="left:1016px;top:436px;width:67px;height:14px;line-height:14px;letter-spacing:0.05px;">0</div>
<div class="c" style="left:1083px;top:434.7px;width:82px;height:14px;line-height:14px;letter-spacing:-0.49px;">0%</div>
<div class="c" style="left:1165px;top:436px;width:43px;height:14px;line-height:14px;letter-spacing:0.03px;">2,55</div>
<div class="c" style="left:1207px;top:436px;width:42px;height:14px;line-height:14px;letter-spacing:0.05px;">0</div>
<div style="left:1334px;top:434px;width:1px;height:16px;background:repeating-linear-gradient(#000 0,#000 2px,#fff 2px,#fff 3px)"></div>
<div style="left:1335px;top:435px;width:26px;height:13px;border:1px solid #ff5a5f;background:linear-gradient(90deg,#ff5a5f,#ffdcdd)"></div>
<div class="r" style="left:1302px;top:436px;width:58px;height:14px;line-height:14px;letter-spacing:-0.31px;">96%</div>
<div class="c" style="left:1362px;top:436px;width:66px;height:14px;line-height:14px;letter-spacing:-0.22px;">-92%</div>
<div class="c" style="left:1429px;top:436px;width:46px;height:14px;line-height:14px;letter-spacing:0.05px;">912</div>
<div style="left:1474px;top:433px;width:61px;height:18px;background:#ffc7ce"></div>
<div class="c" style="left:1474px;top:436px;width:61px;height:14px;line-height:14px;letter-spacing:-0.22px;color:#9c0006;">-83%</div>
<div class="l" style="left:35px;top:453px;width:24px;height:14px;line-height:14px;font-size:10.2px;font-weight:bold;letter-spacing:-0.44px;">PanFBA</div>
<div class="r" style="left:62px;top:453px;width:57px;height:14px;line-height:14px;letter-spacing:0.18px;">113181</div>
<div class="mb" style="left:74px;top:456.5px;width:7px;height:7px;"><i></i></div>
<div class="mb" style="left:127px;top:456.5px;width:7px;height:7px;"><i></i></div>
<div class="l" style="left:136px;top:453px;width:11px;height:14px;line-height:14px;font-size:10.2px;font-weight:bold;letter-spacing:-0.26px;">B0</div>
<div class="l" style="left:246.5px;top:453px;width:3.5px;height:14px;line-height:14px;letter-spacing:-0.98px;">K</div>
<div class="l" style="left:284.4px;top:453px;width:20.6px;height:14px;line-height:14px;letter-spacing:0.19px;letter-spacing:0.3px;">pokrywka</div>
<div class="c" style="left:634px;top:453px;width:61px;height:14px;line-height:14px;letter-spacing:0.05px;">158</div>
<div class="c" style="left:695px;top:453px;width:54px;height:14px;line-height:14px;letter-spacing:0.05px;">79</div>
<div class="c" style="left:749px;top:453px;width:56px;height:14px;line-height:14px;letter-spacing:0.05px;">132</div>
<div class="c" style="left:805px;top:453px;width:49px;height:14px;line-height:14px;letter-spacing:0.05px;">222</div>
<div class="c" style="left:854px;top:453px;width:52px;height:14px;line-height:14px;letter-spacing:0.05px;">-20</div>
<div class="c" style="left:906px;top:453px;width:58px;height:14px;line-height:14px;letter-spacing:0.05px;">20</div>
<div class="c" style="left:964px;top:453px;width:51px;height:14px;line-height:14px;letter-spacing:0.05px;">10</div>
<div class="c" style="left:1016px;top:453px;width:67px;height:14px;line-height:14px;letter-spacing:0.05px;">0</div>
<div class="c" style="left:1083px;top:451.7px;width:82px;height:14px;line-height:14px;letter-spacing:-0.49px;">0%</div>
<div class="c" style="left:1165px;top:453px;width:43px;height:14px;line-height:14px;letter-spacing:0.03px;">0,80</div>
<div class="c" style="left:1207px;top:453px;width:42px;height:14px;line-height:14px;letter-spacing:0.05px;">0</div>
<div style="left:1334px;top:451px;width:1px;height:16px;background:repeating-linear-gradient(#000 0,#000 2px,#fff 2px,#fff 3px)"></div>
<div style="left:1335px;top:452px;width:26px;height:13px;border:1px solid #ff5a5f;background:linear-gradient(90deg,#ff5a5f,#ffdcdd)"></div>
<div class="r" style="left:1302px;top:453px;width:58px;height:14px;line-height:14px;letter-spacing:-0.22px;">141%</div>
<div class="c" style="left:1362px;top:453px;width:66px;height:14px;line-height:14px;letter-spacing:-0.22px;">-59%</div>
<div class="c" style="left:1429px;top:453px;width:46px;height:14px;line-height:14px;letter-spacing:0.05px;">128</div>
<div style="left:1474px;top:450px;width:61px;height:18px;background:#7030a0"></div>
<div class="c" style="left:1474px;top:453px;width:61px;height:14px;line-height:14px;letter-spacing:-0.31px;color:#fff;">23%</div>
<div class="l" style="left:35px;top:470px;width:24px;height:14px;line-height:14px;font-size:10.2px;font-weight:bold;letter-spacing:-0.44px;">PanFBA</div>
<div class="r" style="left:62px;top:470px;width:57px;height:14px;line-height:14px;letter-spacing:0.05px;">121435</div>
<div class="mb" style="left:74px;top:473.5px;width:7px;height:7px;"><i></i></div>
<div class="mb" style="left:127px;top:473.5px;width:7px;height:7px;"><i></i></div>
<div class="l" style="left:136px;top:470px;width:11px;height:14px;line-height:14px;font-size:10.2px;font-weight:bold;letter-spacing:-0.26px;">B0</div>
<div class="l" style="left:246.5px;top:470px;width:3.5px;height:14px;line-height:14px;letter-spacing:-0.98px;">K</div>
<div class="l" style="left:284.4px;top:470px;width:20.6px;height:14px;line-height:14px;letter-spacing:-0.09px;letter-spacing:0.3px;">szklanki</div>
<div class="c" style="left:634px;top:470px;width:61px;height:14px;line-height:14px;letter-spacing:0.05px;">156</div>
<div class="c" style="left:695px;top:470px;width:54px;height:14px;line-height:14px;letter-spacing:0.05px;">78</div>
<div class="c" style="left:749px;top:470px;width:56px;height:14px;line-height:14px;letter-spacing:0.05px;">124</div>
<div class="c" style="left:805px;top:470px;width:49px;height:14px;line-height:14px;letter-spacing:0.05px;">346</div>
<div class="c" style="left:854px;top:470px;width:52px;height:14px;line-height:14px;letter-spacing:0.05px;">-26</div>
<div class="c" style="left:906px;top:470px;width:58px;height:14px;line-height:14px;letter-spacing:0.05px;">8</div>
<div class="c" style="left:964px;top:470px;width:51px;height:14px;line-height:14px;letter-spacing:0.05px;">4</div>
<div class="c" style="left:1016px;top:470px;width:67px;height:14px;line-height:14px;letter-spacing:0.05px;">0</div>
<div class="c" style="left:1083px;top:468.7px;width:82px;height:14px;line-height:14px;letter-spacing:-0.49px;">0%</div>
<div class="c" style="left:1165px;top:470px;width:43px;height:14px;line-height:14px;letter-spacing:0.03px;">1,30</div>
<div class="c" style="left:1207px;top:470px;width:42px;height:14px;line-height:14px;letter-spacing:0.05px;">0</div>
<div style="left:1334px;top:468px;width:1px;height:16px;background:repeating-linear-gradient(#000 0,#000 2px,#fff 2px,#fff 3px)"></div>
<div style="left:1335px;top:469px;width:26px;height:13px;border:1px solid #ff5a5f;background:linear-gradient(90deg,#ff5a5f,#ffdcdd)"></div>
<div class="r" style="left:1302px;top:470px;width:58px;height:14px;line-height:14px;letter-spacing:-0.22px;">222%</div>
<div class="c" style="left:1362px;top:470px;width:66px;height:14px;line-height:14px;letter-spacing:-0.22px;">-36%</div>
<div class="c" style="left:1429px;top:470px;width:46px;height:14px;line-height:14px;letter-spacing:0.05px;">124</div>
<div style="left:1474px;top:467px;width:61px;height:18px;background:#7030a0"></div>
<div class="c" style="left:1474px;top:470px;width:61px;height:14px;line-height:14px;letter-spacing:-0.31px;color:#fff;">26%</div>
<div class="l" style="left:35px;top:487px;width:24px;height:14px;line-height:14px;font-size:10.2px;font-weight:bold;letter-spacing:-0.44px;">PanFBA</div>
<div class="r" style="left:62px;top:487px;width:57px;height:14px;line-height:14px;letter-spacing:0.05px;">121351</div>
<div class="mb" style="left:74px;top:490.5px;width:7px;height:7px;"><i></i></div>
<div class="mb" style="left:127px;top:490.5px;width:7px;height:7px;"><i></i></div>
<div class="l" style="left:136px;top:487px;width:11px;height:14px;line-height:14px;font-size:10.2px;font-weight:bold;letter-spacing:-0.26px;">B0</div>
<div class="l" style="left:246.5px;top:487px;width:3.5px;height:14px;line-height:14px;letter-spacing:-0.98px;">K</div>
<div class="l" style="left:284.4px;top:487px;width:20.6px;height:14px;line-height:14px;letter-spacing:0.3px;">blacha</div>
<div class="c" style="left:634px;top:487px;width:61px;height:14px;line-height:14px;letter-spacing:0.05px;">147</div>
<div class="c" style="left:695px;top:487px;width:54px;height:14px;line-height:14px;letter-spacing:0.03px;">73,5</div>
<div class="c" style="left:749px;top:487px;width:56px;height:14px;line-height:14px;letter-spacing:0.05px;">122</div>
<div class="c" style="left:805px;top:487px;width:49px;height:14px;line-height:14px;letter-spacing:0.05px;">40</div>
<div class="c" style="left:854px;top:487px;width:52px;height:14px;line-height:14px;letter-spacing:0.05px;">-20</div>
<div class="c" style="left:906px;top:487px;width:58px;height:14px;line-height:14px;letter-spacing:0.05px;">26</div>
<div class="c" style="left:964px;top:487px;width:51px;height:14px;line-height:14px;letter-spacing:0.05px;">12</div>
<div class="c" style="left:1016px;top:487px;width:67px;height:14px;line-height:14px;letter-spacing:0.05px;">0</div>
<div class="c" style="left:1083px;top:485.7px;width:82px;height:14px;line-height:14px;letter-spacing:-0.49px;">0%</div>
<div class="c" style="left:1165px;top:487px;width:43px;height:14px;line-height:14px;letter-spacing:0.03px;">3,85</div>
<div class="c" style="left:1207px;top:487px;width:42px;height:14px;line-height:14px;letter-spacing:0.05px;">0</div>
<div style="left:1334px;top:485px;width:1px;height:16px;background:repeating-linear-gradient(#000 0,#000 2px,#fff 2px,#fff 3px)"></div>
<div style="left:1335px;top:486px;width:26px;height:13px;border:1px solid #ff5a5f;background:linear-gradient(90deg,#ff5a5f,#ffdcdd)"></div>
<div class="r" style="left:1302px;top:487px;width:58px;height:14px;line-height:14px;letter-spacing:-0.31px;">27%</div>
<div class="c" style="left:1362px;top:487px;width:66px;height:14px;line-height:14px;letter-spacing:-0.17px;">-305%</div>
<div class="c" style="left:1429px;top:487px;width:46px;height:14px;line-height:14px;letter-spacing:0.05px;">123</div>
<div style="left:1474px;top:484px;width:61px;height:18px;background:#7030a0"></div>
<div class="c" style="left:1474px;top:487px;width:61px;height:14px;line-height:14px;letter-spacing:-0.31px;color:#fff;">20%</div>
<div class="l" style="left:35px;top:504px;width:24px;height:14px;line-height:14px;font-size:10.2px;font-weight:bold;letter-spacing:-0.44px;">PanFBA</div>
<div class="r" style="left:62px;top:504px;width:57px;height:14px;line-height:14px;letter-spacing:0.31px;">115811</div>
<div class="mb" style="left:74px;top:507.5px;width:7px;height:7px;"><i></i></div>
<div class="mb" style="left:127px;top:507.5px;width:7px;height:7px;"><i></i></div>
<div class="l" style="left:136px;top:504px;width:11px;height:14px;line-height:14px;font-size:10.2px;font-weight:bold;letter-spacing:-0.26px;">B0</div>
<div class="l" style="left:246.5px;top:504px;width:3.5px;height:14px;line-height:14px;letter-spacing:-0.98px;">K</div>
<div class="l" style="left:284.4px;top:504px;width:20.6px;height:14px;line-height:14px;letter-spacing:0.08px;letter-spacing:0.3px;">nabierka</div>
<div class="c" style="left:634px;top:504px;width:61px;height:14px;line-height:14px;letter-spacing:0.05px;">145</div>
<div class="c" style="left:695px;top:504px;width:54px;height:14px;line-height:14px;letter-spacing:0.03px;">72,5</div>
<div class="c" style="left:749px;top:504px;width:56px;height:14px;line-height:14px;letter-spacing:0.05px;">138</div>
<div class="c" style="left:805px;top:504px;width:49px;height:14px;line-height:14px;letter-spacing:0.05px;">30</div>
<div class="c" style="left:854px;top:504px;width:52px;height:14px;line-height:14px;letter-spacing:0.06px;">-2</div>
<div class="c" style="left:906px;top:504px;width:58px;height:14px;line-height:14px;letter-spacing:0.05px;">160</div>
<div class="c" style="left:964px;top:504px;width:51px;height:14px;line-height:14px;letter-spacing:0.05px;">0</div>
<div class="c" style="left:1016px;top:504px;width:67px;height:14px;line-height:14px;letter-spacing:0.05px;">0</div>
<div class="c" style="left:1083px;top:502.7px;width:82px;height:14px;line-height:14px;letter-spacing:-0.49px;">0%</div>
<div class="c" style="left:1165px;top:504px;width:43px;height:14px;line-height:14px;letter-spacing:0.03px;">1,89</div>
<div class="c" style="left:1207px;top:504px;width:42px;height:14px;line-height:14px;letter-spacing:0.05px;">0</div>
<div style="left:1334px;top:502px;width:1px;height:16px;background:repeating-linear-gradient(#000 0,#000 2px,#fff 2px,#fff 3px)"></div>
<div style="left:1335px;top:503px;width:26px;height:13px;border:1px solid #ff5a5f;background:linear-gradient(90deg,#ff5a5f,#ffdcdd)"></div>
<div class="r" style="left:1302px;top:504px;width:58px;height:14px;line-height:14px;letter-spacing:-0.31px;">21%</div>
<div class="c" style="left:1362px;top:504px;width:66px;height:14px;line-height:14px;letter-spacing:-0.17px;">-460%</div>
<div class="c" style="left:1429px;top:504px;width:46px;height:14px;line-height:14px;letter-spacing:0.05px;">102</div>
<div style="left:1474px;top:501px;width:61px;height:18px;background:#7030a0"></div>
<div class="c" style="left:1474px;top:504px;width:61px;height:14px;line-height:14px;letter-spacing:-0.31px;color:#fff;">42%</div>
<div class="l" style="left:35px;top:521px;width:24px;height:14px;line-height:14px;font-size:10.2px;font-weight:bold;letter-spacing:-0.44px;">PanFBA</div>
<div class="r" style="left:62px;top:521px;width:57px;height:14px;line-height:14px;letter-spacing:0.05px;">121395</div>
<div class="mb" style="left:74px;top:524.5px;width:7px;height:7px;"><i></i></div>
<div class="mb" style="left:127px;top:524.5px;width:7px;height:7px;"><i></i></div>
<div class="l" style="left:136px;top:521px;width:11px;height:14px;line-height:14px;font-size:10.2px;font-weight:bold;letter-spacing:-0.26px;">B0</div>
<div class="l" style="left:246.5px;top:521px;width:3.5px;height:14px;line-height:14px;letter-spacing:-0.98px;">K</div>
<div class="l" style="left:284.4px;top:521px;width:20.6px;height:14px;line-height:14px;letter-spacing:0.27px;letter-spacing:0.3px;">pojemnik</div>
<div class="c" style="left:634px;top:521px;width:61px;height:14px;line-height:14px;letter-spacing:0.05px;">139</div>
<div class="c" style="left:695px;top:521px;width:54px;height:14px;line-height:14px;letter-spacing:0.03px;">69,5</div>
<div class="c" style="left:749px;top:521px;width:56px;height:14px;line-height:14px;letter-spacing:0.05px;">127</div>
<div class="c" style="left:805px;top:521px;width:49px;height:14px;line-height:14px;letter-spacing:0.05px;">819</div>
<div class="c" style="left:854px;top:521px;width:52px;height:14px;line-height:14px;letter-spacing:0.06px;">-7</div>
<div class="c" style="left:906px;top:521px;width:58px;height:14px;line-height:14px;letter-spacing:0.05px;">24</div>
<div class="c" style="left:964px;top:521px;width:51px;height:14px;line-height:14px;letter-spacing:0.05px;">3</div>
<div class="c" style="left:1016px;top:521px;width:67px;height:14px;line-height:14px;letter-spacing:0.05px;">0</div>
<div class="c" style="left:1083px;top:519.7px;width:82px;height:14px;line-height:14px;letter-spacing:-0.49px;">0%</div>
<div class="c" style="left:1165px;top:521px;width:43px;height:14px;line-height:14px;letter-spacing:0.03px;">3,25</div>
<div class="c" style="left:1207px;top:521px;width:42px;height:14px;line-height:14px;letter-spacing:0.05px;">0</div>
<div style="left:1334px;top:519px;width:1px;height:16px;background:repeating-linear-gradient(#000 0,#000 2px,#fff 2px,#fff 3px)"></div>
<div style="left:1335px;top:520px;width:26px;height:13px;border:1px solid #ff5a5f;background:linear-gradient(90deg,#ff5a5f,#ffdcdd)"></div>
<div class="r" style="left:1302px;top:521px;width:58px;height:14px;line-height:14px;letter-spacing:-0.22px;">589%</div>
<div class="c" style="left:1362px;top:521px;width:66px;height:14px;line-height:14px;letter-spacing:-0.22px;">-16%</div>
<div class="c" style="left:1429px;top:521px;width:46px;height:14px;line-height:14px;letter-spacing:0.05px;">152</div>
<div class="l" style="left:35px;top:538px;width:24px;height:14px;line-height:14px;font-size:10.2px;font-weight:bold;letter-spacing:-0.44px;">PanFBA</div>
<div class="r" style="left:62px;top:538px;width:57px;height:14px;line-height:14px;letter-spacing:0.05px;">140045</div>
<div class="mb" style="left:74px;top:541.5px;width:7px;height:7px;"><i></i></div>
<div class="mb" style="left:127px;top:541.5px;width:7px;height:7px;"><i></i></div>
<div class="l" style="left:136px;top:538px;width:11px;height:14px;line-height:14px;font-size:10.2px;font-weight:bold;letter-spacing:-0.26px;">B0</div>
<div class="l" style="left:246.5px;top:538px;width:3.5px;height:14px;line-height:14px;letter-spacing:-0.98px;">K</div>
<div class="l" style="left:284.4px;top:538px;width:20.6px;height:14px;line-height:14px;letter-spacing:-0.20px;letter-spacing:0.3px;">Szklanki</div>
<div class="c" style="left:634px;top:538px;width:61px;height:14px;line-height:14px;letter-spacing:0.05px;">132</div>
<div class="c" style="left:695px;top:538px;width:54px;height:14px;line-height:14px;letter-spacing:0.05px;">66</div>
<div class="c" style="left:749px;top:538px;width:56px;height:14px;line-height:14px;letter-spacing:0.31px;">110</div>
<div class="c" style="left:805px;top:538px;width:49px;height:14px;line-height:14px;letter-spacing:0.05px;">15</div>
<div class="c" style="left:854px;top:538px;width:52px;height:14px;line-height:14px;letter-spacing:0.05px;">-17</div>
<div class="c" style="left:906px;top:538px;width:58px;height:14px;line-height:14px;letter-spacing:0.05px;">8</div>
<div class="c" style="left:964px;top:538px;width:51px;height:14px;line-height:14px;letter-spacing:0.05px;">12</div>
<div class="c" style="left:1016px;top:538px;width:67px;height:14px;line-height:14px;letter-spacing:0.05px;">0</div>
<div class="c" style="left:1083px;top:536.7px;width:82px;height:14px;line-height:14px;letter-spacing:-0.49px;">0%</div>
<div class="c" style="left:1165px;top:538px;width:43px;height:14px;line-height:14px;letter-spacing:0.03px;">3,71</div>
<div class="c" style="left:1207px;top:538px;width:42px;height:14px;line-height:14px;letter-spacing:0.05px;">0</div>
<div style="left:1334px;top:536px;width:1px;height:16px;background:repeating-linear-gradient(#000 0,#000 2px,#fff 2px,#fff 3px)"></div>
<div style="left:1335px;top:537px;width:26px;height:13px;border:1px solid #ff5a5f;background:linear-gradient(90deg,#ff5a5f,#ffdcdd)"></div>
<div class="r" style="left:1302px;top:538px;width:58px;height:14px;line-height:14px;letter-spacing:-0.05px;">11%</div>
<div class="c" style="left:1362px;top:538px;width:66px;height:14px;line-height:14px;letter-spacing:-0.17px;">-733%</div>
<div class="c" style="left:1429px;top:538px;width:46px;height:14px;line-height:14px;letter-spacing:0.05px;">356</div>
<div style="left:1474px;top:535px;width:61px;height:18px;background:#ffc7ce"></div>
<div class="c" style="left:1474px;top:538px;width:61px;height:14px;line-height:14px;letter-spacing:-0.22px;color:#9c0006;">-63%</div>
<div class="l" style="left:35px;top:555px;width:24px;height:14px;line-height:14px;font-size:10.2px;font-weight:bold;letter-spacing:-0.44px;">PanFBA</div>
<div class="r" style="left:62px;top:555px;width:57px;height:14px;line-height:14px;letter-spacing:0.05px;">94048</div>
<div class="mb" style="left:80px;top:558.5px;width:7px;height:7px;"><i></i></div>
<div class="mb" style="left:127px;top:558.5px;width:7px;height:7px;"><i></i></div>
<div class="l" style="left:136px;top:555px;width:11px;height:14px;line-height:14px;font-size:10.2px;font-weight:bold;letter-spacing:-0.26px;">B0</div>
<div class="l" style="left:246.5px;top:555px;width:3.5px;height:14px;line-height:14px;letter-spacing:-0.98px;">K</div>
<div class="l" style="left:284.4px;top:555px;width:20.6px;height:14px;line-height:14px;letter-spacing:-0.29px;letter-spacing:0.3px;">suszarka</div>
<div class="c" style="left:634px;top:555px;width:61px;height:14px;line-height:14px;letter-spacing:0.31px;">118</div>
<div class="c" style="left:695px;top:555px;width:54px;height:14px;line-height:14px;letter-spacing:0.05px;">59</div>
<div class="c" style="left:749px;top:555px;width:56px;height:14px;line-height:14px;letter-spacing:0.31px;">114</div>
<div class="c" style="left:805px;top:555px;width:49px;height:14px;line-height:14px;letter-spacing:0.05px;">101</div>
<div class="c" style="left:854px;top:555px;width:52px;height:14px;line-height:14px;letter-spacing:0.05px;">0</div>
<div class="c" style="left:906px;top:555px;width:58px;height:14px;line-height:14px;letter-spacing:0.05px;">30</div>
<div class="c" style="left:964px;top:555px;width:51px;height:14px;line-height:14px;letter-spacing:0.05px;">0</div>
<div class="c" style="left:1016px;top:555px;width:67px;height:14px;line-height:14px;letter-spacing:0.05px;">0</div>
<div class="c" style="left:1083px;top:553.7px;width:82px;height:14px;line-height:14px;letter-spacing:-0.49px;">0%</div>
<div class="c" style="left:1207px;top:555px;width:42px;height:14px;line-height:14px;letter-spacing:0.05px;">0</div>
<div style="left:1334px;top:553px;width:1px;height:16px;background:repeating-linear-gradient(#000 0,#000 2px,#fff 2px,#fff 3px)"></div>
<div style="left:1335px;top:554px;width:26px;height:13px;border:1px solid #ff5a5f;background:linear-gradient(90deg,#ff5a5f,#ffdcdd)"></div>
<div class="r" style="left:1302px;top:555px;width:58px;height:14px;line-height:14px;letter-spacing:-0.31px;">86%</div>
<div class="c" style="left:1362px;top:555px;width:66px;height:14px;line-height:14px;">-113%</div>
<div class="c" style="left:1429px;top:555px;width:46px;height:14px;line-height:14px;letter-spacing:0.05px;">101</div>
<div style="left:1474px;top:552px;width:61px;height:18px;background:#7030a0"></div>
<div class="c" style="left:1474px;top:555px;width:61px;height:14px;line-height:14px;letter-spacing:-0.31px;color:#fff;">17%</div>
<div class="l" style="left:35px;top:572px;width:24px;height:14px;line-height:14px;font-size:10.2px;font-weight:bold;letter-spacing:-0.44px;">PanFBA</div>
<div class="r" style="left:62px;top:572px;width:57px;height:14px;line-height:14px;letter-spacing:0.05px;">121639</div>
<div class="mb" style="left:74px;top:575.5px;width:7px;height:7px;"><i></i></div>
<div class="mb" style="left:127px;top:575.5px;width:7px;height:7px;"><i></i></div>
<div class="l" style="left:136px;top:572px;width:11px;height:14px;line-height:14px;font-size:10.2px;font-weight:bold;letter-spacing:-0.26px;">B0</div>
<div class="l" style="left:246.5px;top:572px;width:3.5px;height:14px;line-height:14px;letter-spacing:-0.98px;">K</div>
<div class="l" style="left:284.4px;top:572px;width:20.6px;height:14px;line-height:14px;letter-spacing:-0.03px;letter-spacing:0.3px;">szumówka</div>
<div class="c" style="left:634px;top:572px;width:61px;height:14px;line-height:14px;letter-spacing:0.31px;">118</div>
<div class="c" style="left:695px;top:572px;width:54px;height:14px;line-height:14px;letter-spacing:0.05px;">59</div>
<div class="c" style="left:749px;top:572px;width:56px;height:14px;line-height:14px;letter-spacing:0.05px;">103</div>
<div class="c" style="left:805px;top:572px;width:49px;height:14px;line-height:14px;letter-spacing:0.05px;">30</div>
<div class="c" style="left:854px;top:572px;width:52px;height:14px;line-height:14px;letter-spacing:0.32px;">-11</div>
<div class="c" style="left:906px;top:572px;width:58px;height:14px;line-height:14px;letter-spacing:0.05px;">180</div>
<div class="c" style="left:964px;top:572px;width:51px;height:14px;line-height:14px;letter-spacing:0.05px;">10</div>
<div class="c" style="left:1016px;top:572px;width:67px;height:14px;line-height:14px;letter-spacing:0.05px;">0</div>
<div class="c" style="left:1083px;top:570.7px;width:82px;height:14px;line-height:14px;letter-spacing:-0.49px;">0%</div>
<div class="c" style="left:1165px;top:572px;width:43px;height:14px;line-height:14px;letter-spacing:0.03px;">2,20</div>
<div class="c" style="left:1207px;top:572px;width:42px;height:14px;line-height:14px;letter-spacing:0.05px;">0</div>
<div style="left:1334px;top:570px;width:1px;height:16px;background:repeating-linear-gradient(#000 0,#000 2px,#fff 2px,#fff 3px)"></div>
<div style="left:1335px;top:571px;width:26px;height:13px;border:1px solid #ff5a5f;background:linear-gradient(90deg,#ff5a5f,#ffdcdd)"></div>
<div class="r" style="left:1302px;top:572px;width:58px;height:14px;line-height:14px;letter-spacing:-0.31px;">25%</div>
<div class="c" style="left:1362px;top:572px;width:66px;height:14px;line-height:14px;letter-spacing:-0.17px;">-343%</div>
<div class="c" style="left:1429px;top:572px;width:46px;height:14px;line-height:14px;letter-spacing:0.05px;">157</div>
<div class="l" style="left:35px;top:589px;width:24px;height:14px;line-height:14px;font-size:10.2px;font-weight:bold;letter-spacing:-0.44px;">PanFBA</div>
<div class="r" style="left:62px;top:589px;width:57px;height:14px;line-height:14px;letter-spacing:0.05px;">147075</div>
<div class="mb" style="left:74px;top:592.5px;width:7px;height:7px;"><i></i></div>
<div class="mb" style="left:127px;top:592.5px;width:7px;height:7px;"><i></i></div>
<div class="l" style="left:136px;top:589px;width:11px;height:14px;line-height:14px;font-size:10.2px;font-weight:bold;letter-spacing:-0.26px;">B0</div>
<div class="l" style="left:246.5px;top:589px;width:3.5px;height:14px;line-height:14px;letter-spacing:-0.98px;">K</div>
<div class="l" style="left:284.4px;top:589px;width:20.6px;height:14px;line-height:14px;letter-spacing:0.3px;">salaterka</div>
<div class="c" style="left:634px;top:589px;width:61px;height:14px;line-height:14px;letter-spacing:0.05px;">108</div>
<div class="c" style="left:695px;top:589px;width:54px;height:14px;line-height:14px;letter-spacing:0.05px;">54</div>
<div class="c" style="left:749px;top:589px;width:56px;height:14px;line-height:14px;letter-spacing:0.05px;">103</div>
<div class="c" style="left:805px;top:589px;width:49px;height:14px;line-height:14px;letter-spacing:0.05px;">42</div>
<div class="c" style="left:854px;top:589px;width:52px;height:14px;line-height:14px;letter-spacing:0.06px;">-1</div>
<div class="c" style="left:906px;top:589px;width:58px;height:14px;line-height:14px;letter-spacing:0.05px;">16</div>
<div class="c" style="left:964px;top:589px;width:51px;height:14px;line-height:14px;letter-spacing:0.05px;">26</div>
<div class="c" style="left:1016px;top:589px;width:67px;height:14px;line-height:14px;letter-spacing:0.05px;">0</div>
<div class="c" style="left:1083px;top:587.7px;width:82px;height:14px;line-height:14px;letter-spacing:-0.49px;">0%</div>
<div class="c" style="left:1165px;top:589px;width:43px;height:14px;line-height:14px;letter-spacing:0.03px;">5,86</div>
<div class="c" style="left:1207px;top:589px;width:42px;height:14px;line-height:14px;letter-spacing:0.05px;">0</div>
<div style="left:1334px;top:587px;width:1px;height:16px;background:repeating-linear-gradient(#000 0,#000 2px,#fff 2px,#fff 3px)"></div>
<div style="left:1335px;top:588px;width:26px;height:13px;border:1px solid #ff5a5f;background:linear-gradient(90deg,#ff5a5f,#ffdcdd)"></div>
<div class="r" style="left:1302px;top:589px;width:58px;height:14px;line-height:14px;letter-spacing:-0.31px;">39%</div>
<div class="c" style="left:1362px;top:589px;width:66px;height:14px;line-height:14px;letter-spacing:-0.17px;">-245%</div>
<div class="c" style="left:1429px;top:589px;width:46px;height:14px;line-height:14px;letter-spacing:0.05px;">101</div>
<div style="left:1474px;top:586px;width:61px;height:18px;background:#7030a0"></div>
<div class="c" style="left:1474px;top:589px;width:61px;height:14px;line-height:14px;letter-spacing:-0.49px;color:#fff;">7%</div>
<div class="l" style="left:35px;top:606px;width:24px;height:14px;line-height:14px;font-size:10.2px;font-weight:bold;letter-spacing:-0.44px;">PanFBA</div>
<div class="r" style="left:62px;top:606px;width:57px;height:14px;line-height:14px;letter-spacing:0.18px;">119143</div>
<div class="mb" style="left:74px;top:609.5px;width:7px;height:7px;"><i></i></div>
<div class="mb" style="left:127px;top:609.5px;width:7px;height:7px;"><i></i></div>
<div class="l" style="left:136px;top:606px;width:11px;height:14px;line-height:14px;font-size:10.2px;font-weight:bold;letter-spacing:-0.26px;">B0</div>
<div class="l" style="left:246.5px;top:606px;width:3.5px;height:14px;line-height:14px;letter-spacing:-0.98px;">K</div>
<div class="l" style="left:284.4px;top:606px;width:20.6px;height:14px;line-height:14px;letter-spacing:0.03px;letter-spacing:0.3px;">chlebak</div>
<div class="c" style="left:634px;top:606px;width:61px;height:14px;line-height:14px;letter-spacing:0.05px;">104</div>
<div class="c" style="left:695px;top:606px;width:54px;height:14px;line-height:14px;letter-spacing:0.05px;">52</div>
<div class="c" style="left:749px;top:606px;width:56px;height:14px;line-height:14px;letter-spacing:0.05px;">62</div>
<div class="c" style="left:805px;top:606px;width:49px;height:14px;line-height:14px;letter-spacing:0.05px;">54</div>
<div class="c" style="left:854px;top:606px;width:52px;height:14px;line-height:14px;letter-spacing:0.05px;">-38</div>
<div class="c" style="left:906px;top:606px;width:58px;height:14px;line-height:14px;letter-spacing:0.05px;">4</div>
<div class="c" style="left:964px;top:606px;width:51px;height:14px;line-height:14px;letter-spacing:0.05px;">10</div>
<div class="c" style="left:1016px;top:606px;width:67px;height:14px;line-height:14px;letter-spacing:0.05px;">0</div>
<div class="c" style="left:1083px;top:604.7px;width:82px;height:14px;line-height:14px;letter-spacing:-0.49px;">0%</div>
<div class="c" style="left:1165px;top:606px;width:43px;height:14px;line-height:14px;letter-spacing:0.03px;">7,49</div>
<div class="c" style="left:1207px;top:606px;width:42px;height:14px;line-height:14px;letter-spacing:0.05px;">0</div>
<div style="left:1334px;top:604px;width:1px;height:16px;background:repeating-linear-gradient(#000 0,#000 2px,#fff 2px,#fff 3px)"></div>
<div style="left:1335px;top:605px;width:26px;height:13px;border:1px solid #ff5a5f;background:linear-gradient(90deg,#ff5a5f,#ffdcdd)"></div>
<div class="r" style="left:1302px;top:606px;width:58px;height:14px;line-height:14px;letter-spacing:-0.31px;">52%</div>
<div class="c" style="left:1362px;top:606px;width:66px;height:14px;line-height:14px;">-115%</div>
<div class="c" style="left:1429px;top:606px;width:46px;height:14px;line-height:14px;letter-spacing:0.05px;">61</div>
<div style="left:1474px;top:603px;width:61px;height:18px;background:#7030a0"></div>
<div class="c" style="left:1474px;top:606px;width:61px;height:14px;line-height:14px;letter-spacing:-0.31px;color:#fff;">70%</div>
<div class="l" style="left:35px;top:623px;width:24px;height:14px;line-height:14px;font-size:10.2px;font-weight:bold;letter-spacing:-0.44px;">PanFBA</div>
<div class="r" style="left:62px;top:623px;width:57px;height:14px;line-height:14px;letter-spacing:0.05px;">152086</div>
<div class="mb" style="left:74px;top:626.5px;width:7px;height:7px;"><i></i></div>
<div class="mb" style="left:127px;top:626.5px;width:7px;height:7px;"><i></i></div>
<div class="l" style="left:136px;top:623px;width:11px;height:14px;line-height:14px;font-size:10.2px;font-weight:bold;letter-spacing:-0.26px;">B0</div>
<div class="l" style="left:246.5px;top:623px;width:3.5px;height:14px;line-height:14px;letter-spacing:-0.98px;">K</div>
<div class="l" style="left:284.4px;top:623px;width:20.6px;height:14px;line-height:14px;letter-spacing:-0.09px;letter-spacing:0.3px;">Puchar</div>
<div class="c" style="left:634px;top:623px;width:61px;height:14px;line-height:14px;letter-spacing:0.05px;">100</div>
<div class="c" style="left:695px;top:623px;width:54px;height:14px;line-height:14px;letter-spacing:0.05px;">50</div>
<div class="c" style="left:749px;top:623px;width:56px;height:14px;line-height:14px;letter-spacing:0.05px;">72</div>
<div class="c" style="left:805px;top:623px;width:49px;height:14px;line-height:14px;letter-spacing:0.05px;">24</div>
<div class="c" style="left:854px;top:623px;width:52px;height:14px;line-height:14px;letter-spacing:0.05px;">-24</div>
<div class="c" style="left:906px;top:623px;width:58px;height:14px;line-height:14px;letter-spacing:0.05px;">8</div>
<div class="c" style="left:964px;top:623px;width:51px;height:14px;line-height:14px;letter-spacing:0.05px;">51</div>
<div class="c" style="left:1016px;top:623px;width:67px;height:14px;line-height:14px;letter-spacing:0.05px;">0</div>
<div class="c" style="left:1083px;top:621.7px;width:82px;height:14px;line-height:14px;letter-spacing:-0.49px;">0%</div>
<div class="c" style="left:1165px;top:623px;width:43px;height:14px;line-height:14px;letter-spacing:0.03px;">0,63</div>
<div class="c" style="left:1207px;top:623px;width:42px;height:14px;line-height:14px;letter-spacing:0.05px;">0</div>
<div style="left:1334px;top:621px;width:1px;height:16px;background:repeating-linear-gradient(#000 0,#000 2px,#fff 2px,#fff 3px)"></div>
<div style="left:1335px;top:622px;width:26px;height:13px;border:1px solid #ff5a5f;background:linear-gradient(90deg,#ff5a5f,#ffdcdd)"></div>
<div class="r" style="left:1302px;top:623px;width:58px;height:14px;line-height:14px;letter-spacing:-0.31px;">24%</div>
<div class="c" style="left:1362px;top:623px;width:66px;height:14px;line-height:14px;letter-spacing:-0.17px;">-300%</div>
<div class="c" style="left:1429px;top:623px;width:46px;height:14px;line-height:14px;letter-spacing:0.05px;">156</div>
<div style="left:1474px;top:620px;width:61px;height:18px;background:#ffc7ce"></div>
<div class="c" style="left:1474px;top:623px;width:61px;height:14px;line-height:14px;letter-spacing:-0.22px;color:#9c0006;">-36%</div>
<div class="l" style="left:35px;top:640px;width:24px;height:14px;line-height:14px;font-size:10.2px;font-weight:bold;letter-spacing:-0.44px;">PanFBA</div>
<div class="r" style="left:62px;top:640px;width:57px;height:14px;line-height:14px;letter-spacing:0.05px;">121695</div>
<div class="mb" style="left:74px;top:643.5px;width:7px;height:7px;"><i></i></div>
<div class="mb" style="left:127px;top:643.5px;width:7px;height:7px;"><i></i></div>
<div class="l" style="left:136px;top:640px;width:11px;height:14px;line-height:14px;font-size:10.2px;font-weight:bold;letter-spacing:-0.26px;">B0</div>
<div class="l" style="left:246.5px;top:640px;width:3.5px;height:14px;line-height:14px;letter-spacing:-0.98px;">K</div>
<div class="l" style="left:284.4px;top:640px;width:20.6px;height:14px;line-height:14px;letter-spacing:0.08px;letter-spacing:0.3px;">nabierka</div>
<div class="c" style="left:634px;top:640px;width:61px;height:14px;line-height:14px;letter-spacing:0.05px;">94</div>
<div class="c" style="left:695px;top:640px;width:54px;height:14px;line-height:14px;letter-spacing:0.05px;">47</div>
<div class="c" style="left:749px;top:640px;width:56px;height:14px;line-height:14px;letter-spacing:0.05px;">63</div>
<div class="c" style="left:805px;top:640px;width:49px;height:14px;line-height:14px;letter-spacing:0.05px;">46</div>
<div class="c" style="left:854px;top:640px;width:52px;height:14px;line-height:14px;letter-spacing:0.05px;">-27</div>
<div class="c" style="left:906px;top:640px;width:58px;height:14px;line-height:14px;letter-spacing:0.05px;">160</div>
<div class="c" style="left:964px;top:640px;width:51px;height:14px;line-height:14px;letter-spacing:0.05px;">12</div>
<div class="c" style="left:1016px;top:640px;width:67px;height:14px;line-height:14px;letter-spacing:0.05px;">0</div>
<div class="c" style="left:1083px;top:638.7px;width:82px;height:14px;line-height:14px;letter-spacing:-0.49px;">0%</div>
<div class="c" style="left:1165px;top:640px;width:43px;height:14px;line-height:14px;letter-spacing:0.03px;">5,26</div>
<div class="c" style="left:1207px;top:640px;width:42px;height:14px;line-height:14px;letter-spacing:0.05px;">0</div>
<div style="left:1334px;top:638px;width:1px;height:16px;background:repeating-linear-gradient(#000 0,#000 2px,#fff 2px,#fff 3px)"></div>
<div style="left:1335px;top:639px;width:26px;height:13px;border:1px solid #ff5a5f;background:linear-gradient(90deg,#ff5a5f,#ffdcdd)"></div>
<div class="r" style="left:1302px;top:640px;width:58px;height:14px;line-height:14px;letter-spacing:-0.31px;">49%</div>
<div class="c" style="left:1362px;top:640px;width:66px;height:14px;line-height:14px;letter-spacing:-0.17px;">-137%</div>
<div class="c" style="left:1429px;top:640px;width:46px;height:14px;line-height:14px;letter-spacing:0.05px;">93</div>
<div style="left:1474px;top:637px;width:61px;height:18px;background:#7030a0"></div>
<div class="c" style="left:1474px;top:640px;width:61px;height:14px;line-height:14px;letter-spacing:-0.49px;color:#fff;">1%</div>
<div class="l" style="left:35px;top:657px;width:24px;height:14px;line-height:14px;font-size:10.2px;font-weight:bold;letter-spacing:-0.44px;">PanFBA</div>
<div class="r" style="left:62px;top:657px;width:57px;height:14px;line-height:14px;letter-spacing:0.05px;">182341</div>
<div class="mb" style="left:74px;top:660.5px;width:7px;height:7px;"><i></i></div>
<div class="mb" style="left:127px;top:660.5px;width:7px;height:7px;"><i></i></div>
<div class="l" style="left:136px;top:657px;width:11px;height:14px;line-height:14px;font-size:10.2px;font-weight:bold;letter-spacing:-0.26px;">B0</div>
<div class="l" style="left:246.5px;top:657px;width:3.5px;height:14px;line-height:14px;letter-spacing:-0.98px;">K</div>
<div class="l" style="left:284.4px;top:657px;width:20.6px;height:14px;line-height:14px;letter-spacing:-0.11px;letter-spacing:0.3px;">Naczynie</div>
<div class="c" style="left:634px;top:657px;width:61px;height:14px;line-height:14px;letter-spacing:0.05px;">93</div>
<div class="c" style="left:695px;top:657px;width:54px;height:14px;line-height:14px;letter-spacing:0.03px;">46,5</div>
<div class="c" style="left:749px;top:657px;width:56px;height:14px;line-height:14px;letter-spacing:0.05px;">84</div>
<div class="c" style="left:805px;top:657px;width:49px;height:14px;line-height:14px;letter-spacing:0.05px;">57</div>
<div class="c" style="left:854px;top:657px;width:52px;height:14px;line-height:14px;letter-spacing:0.06px;">-5</div>
<div class="c" style="left:906px;top:657px;width:58px;height:14px;line-height:14px;letter-spacing:-0.15px;">#DZIEL/0!</div>
<div class="c" style="left:964px;top:657px;width:51px;height:14px;line-height:14px;letter-spacing:0.05px;">34</div>
<div class="c" style="left:1016px;top:657px;width:67px;height:14px;line-height:14px;letter-spacing:0.05px;">0</div>
<div class="c" style="left:1083px;top:655.7px;width:82px;height:14px;line-height:14px;letter-spacing:-0.49px;">0%</div>
<div class="c" style="left:1207px;top:657px;width:42px;height:14px;line-height:14px;letter-spacing:0.05px;">0</div>
<div style="left:1334px;top:655px;width:1px;height:16px;background:repeating-linear-gradient(#000 0,#000 2px,#fff 2px,#fff 3px)"></div>
<div style="left:1335px;top:656px;width:26px;height:13px;border:1px solid #ff5a5f;background:linear-gradient(90deg,#ff5a5f,#ffdcdd)"></div>
<div class="r" style="left:1302px;top:657px;width:58px;height:14px;line-height:14px;letter-spacing:-0.31px;">61%</div>
<div class="c" style="left:1362px;top:657px;width:66px;height:14px;line-height:14px;letter-spacing:-0.17px;">-147%</div>
<div class="c" style="left:1429px;top:657px;width:46px;height:14px;line-height:14px;letter-spacing:0.05px;">95</div>
<div class="l" style="left:35px;top:674px;width:24px;height:14px;line-height:14px;font-size:10.2px;font-weight:bold;letter-spacing:-0.44px;">PanFBA</div>
<div class="r" style="left:62px;top:674px;width:57px;height:14px;line-height:14px;letter-spacing:0.05px;">182407</div>
<div class="mb" style="left:74px;top:677.5px;width:7px;height:7px;"><i></i></div>
<div class="mb" style="left:127px;top:677.5px;width:7px;height:7px;"><i></i></div>
<div class="l" style="left:136px;top:674px;width:11px;height:14px;line-height:14px;font-size:10.2px;font-weight:bold;letter-spacing:-0.26px;">B0</div>
<div class="l" style="left:246.5px;top:674px;width:3.5px;height:14px;line-height:14px;letter-spacing:-0.98px;">K</div>
<div class="l" style="left:284.4px;top:674px;width:20.6px;height:14px;line-height:14px;letter-spacing:-0.10px;letter-spacing:0.3px;">Wyciskarka</div>
<div class="c" style="left:634px;top:674px;width:61px;height:14px;line-height:14px;letter-spacing:0.05px;">92</div>
<div class="c" style="left:695px;top:674px;width:54px;height:14px;line-height:14px;letter-spacing:0.05px;">46</div>
<div class="c" style="left:749px;top:674px;width:56px;height:14px;line-height:14px;letter-spacing:0.05px;">80</div>
<div class="c" style="left:805px;top:674px;width:49px;height:14px;line-height:14px;letter-spacing:0.05px;">33</div>
<div class="c" style="left:854px;top:674px;width:52px;height:14px;line-height:14px;letter-spacing:0.06px;">-8</div>
<div class="c" style="left:906px;top:674px;width:58px;height:14px;line-height:14px;letter-spacing:-0.15px;">#DZIEL/0!</div>
<div class="c" style="left:964px;top:674px;width:51px;height:14px;line-height:14px;letter-spacing:0.05px;">31</div>
<div class="c" style="left:1016px;top:674px;width:67px;height:14px;line-height:14px;letter-spacing:0.05px;">0</div>
<div class="c" style="left:1083px;top:672.7px;width:82px;height:14px;line-height:14px;letter-spacing:-0.49px;">0%</div>
<div class="c" style="left:1207px;top:674px;width:42px;height:14px;line-height:14px;letter-spacing:0.05px;">0</div>
<div style="left:1334px;top:672px;width:1px;height:16px;background:repeating-linear-gradient(#000 0,#000 2px,#fff 2px,#fff 3px)"></div>
<div style="left:1335px;top:673px;width:26px;height:13px;border:1px solid #ff5a5f;background:linear-gradient(90deg,#ff5a5f,#ffdcdd)"></div>
<div class="r" style="left:1302px;top:674px;width:58px;height:14px;line-height:14px;letter-spacing:-0.31px;">36%</div>
<div class="c" style="left:1362px;top:674px;width:66px;height:14px;line-height:14px;letter-spacing:-0.17px;">-242%</div>
<div class="c" style="left:1429px;top:674px;width:46px;height:14px;line-height:14px;letter-spacing:0.05px;">46</div>
<div style="left:1474px;top:671px;width:61px;height:18px;background:#7030a0"></div>
<div class="c" style="left:1474px;top:674px;width:61px;height:14px;line-height:14px;letter-spacing:-0.22px;color:#fff;">100%</div>
<div class="l" style="left:35px;top:691px;width:24px;height:14px;line-height:14px;font-size:10.2px;font-weight:bold;letter-spacing:-0.44px;">PanFBA</div>
<div class="r" style="left:62px;top:691px;width:57px;height:14px;line-height:14px;letter-spacing:0.05px;">166413</div>
<div class="mb" style="left:74px;top:694.5px;width:7px;height:7px;"><i></i></div>
<div class="mb" style="left:127px;top:694.5px;width:7px;height:7px;"><i></i></div>
<div class="l" style="left:136px;top:691px;width:11px;height:14px;line-height:14px;font-size:10.2px;font-weight:bold;letter-spacing:-0.26px;">B0</div>
<div class="l" style="left:246.5px;top:691px;width:3.5px;height:14px;line-height:14px;letter-spacing:-0.98px;">K</div>
<div class="l" style="left:284.4px;top:691px;width:20.6px;height:14px;line-height:14px;letter-spacing:-0.16px;letter-spacing:0.3px;">Karafka</div>
<div class="c" style="left:634px;top:691px;width:61px;height:14px;line-height:14px;letter-spacing:0.05px;">80</div>
<div class="c" style="left:695px;top:691px;width:54px;height:14px;line-height:14px;letter-spacing:0.05px;">40</div>
<div class="c" style="left:749px;top:691px;width:56px;height:14px;line-height:14px;letter-spacing:0.05px;">47</div>
<div class="c" style="left:805px;top:691px;width:49px;height:14px;line-height:14px;letter-spacing:0.05px;">101</div>
<div class="c" style="left:854px;top:691px;width:52px;height:14px;line-height:14px;letter-spacing:0.05px;">-30</div>
<div class="c" style="left:906px;top:691px;width:58px;height:14px;line-height:14px;letter-spacing:0.05px;">24</div>
<div class="c" style="left:964px;top:691px;width:51px;height:14px;line-height:14px;letter-spacing:0.05px;">28</div>
<div class="c" style="left:1016px;top:691px;width:67px;height:14px;line-height:14px;letter-spacing:0.05px;">0</div>
<div class="c" style="left:1083px;top:689.7px;width:82px;height:14px;line-height:14px;letter-spacing:-0.49px;">0%</div>
<div class="c" style="left:1165px;top:691px;width:43px;height:14px;line-height:14px;letter-spacing:0.03px;">0,00</div>
<div class="c" style="left:1207px;top:691px;width:42px;height:14px;line-height:14px;letter-spacing:0.05px;">0</div>
<div style="left:1334px;top:689px;width:1px;height:16px;background:repeating-linear-gradient(#000 0,#000 2px,#fff 2px,#fff 3px)"></div>
<div style="left:1335px;top:690px;width:26px;height:13px;border:1px solid #ff5a5f;background:linear-gradient(90deg,#ff5a5f,#ffdcdd)"></div>
<div class="r" style="left:1302px;top:691px;width:58px;height:14px;line-height:14px;letter-spacing:-0.22px;">126%</div>
<div class="c" style="left:1362px;top:691px;width:66px;height:14px;line-height:14px;letter-spacing:-0.22px;">-47%</div>
<div class="c" style="left:1429px;top:691px;width:46px;height:14px;line-height:14px;letter-spacing:0.05px;">43</div>
<div style="left:1474px;top:688px;width:61px;height:18px;background:#7030a0"></div>
<div class="c" style="left:1474px;top:691px;width:61px;height:14px;line-height:14px;letter-spacing:-0.31px;color:#fff;">86%</div>
<div class="l" style="left:35px;top:708px;width:24px;height:14px;line-height:14px;font-size:10.2px;font-weight:bold;letter-spacing:-0.44px;">PanFBA</div>
<div class="r" style="left:62px;top:708px;width:57px;height:14px;line-height:14px;letter-spacing:0.05px;">141397</div>
<div class="mb" style="left:74px;top:711.5px;width:7px;height:7px;"><i></i></div>
<div class="mb" style="left:127px;top:711.5px;width:7px;height:7px;"><i></i></div>
<div class="l" style="left:136px;top:708px;width:11px;height:14px;line-height:14px;font-size:10.2px;font-weight:bold;letter-spacing:-0.26px;">B0</div>
<div class="l" style="left:246.5px;top:708px;width:3.5px;height:14px;line-height:14px;letter-spacing:-0.98px;">K</div>
<div class="l" style="left:284.4px;top:708px;width:20.6px;height:14px;line-height:14px;letter-spacing:-0.20px;letter-spacing:0.3px;">Szklanki</div>
<div class="c" style="left:634px;top:708px;width:61px;height:14px;line-height:14px;letter-spacing:0.05px;">76</div>
<div class="c" style="left:695px;top:708px;width:54px;height:14px;line-height:14px;letter-spacing:0.05px;">38</div>
<div class="c" style="left:749px;top:708px;width:56px;height:14px;line-height:14px;letter-spacing:0.05px;">66</div>
<div class="c" style="left:805px;top:708px;width:49px;height:14px;line-height:14px;letter-spacing:0.05px;">167</div>
<div class="c" style="left:854px;top:708px;width:52px;height:14px;line-height:14px;letter-spacing:0.06px;">-7</div>
<div class="c" style="left:906px;top:708px;width:58px;height:14px;line-height:14px;letter-spacing:0.05px;">8</div>
<div class="c" style="left:964px;top:708px;width:51px;height:14px;line-height:14px;letter-spacing:0.05px;">1</div>
<div class="c" style="left:1016px;top:708px;width:67px;height:14px;line-height:14px;letter-spacing:0.05px;">0</div>
<div class="c" style="left:1083px;top:706.7px;width:82px;height:14px;line-height:14px;letter-spacing:-0.49px;">0%</div>
<div class="c" style="left:1165px;top:708px;width:43px;height:14px;line-height:14px;letter-spacing:0.03px;">3,95</div>
<div class="c" style="left:1207px;top:708px;width:42px;height:14px;line-height:14px;letter-spacing:0.05px;">0</div>
<div style="left:1334px;top:706px;width:1px;height:16px;background:repeating-linear-gradient(#000 0,#000 2px,#fff 2px,#fff 3px)"></div>
<div style="left:1335px;top:707px;width:26px;height:13px;border:1px solid #ff5a5f;background:linear-gradient(90deg,#ff5a5f,#ffdcdd)"></div>
<div class="r" style="left:1302px;top:708px;width:58px;height:14px;line-height:14px;letter-spacing:-0.22px;">220%</div>
<div class="c" style="left:1362px;top:708px;width:66px;height:14px;line-height:14px;letter-spacing:-0.22px;">-40%</div>
<div class="c" style="left:1429px;top:708px;width:46px;height:14px;line-height:14px;letter-spacing:0.05px;">169</div>
<div style="left:1474px;top:705px;width:61px;height:18px;background:#ffc7ce"></div>
<div class="c" style="left:1474px;top:708px;width:61px;height:14px;line-height:14px;letter-spacing:-0.22px;color:#9c0006;">-55%</div>
<div class="l" style="left:35px;top:725px;width:24px;height:14px;line-height:14px;font-size:10.2px;font-weight:bold;letter-spacing:-0.44px;">PanFBA</div>
<div class="r" style="left:62px;top:725px;width:57px;height:14px;line-height:14px;letter-spacing:0.05px;">141509</div>
<div class="mb" style="left:74px;top:728.5px;width:7px;height:7px;"><i></i></div>
<div class="mb" style="left:127px;top:728.5px;width:7px;height:7px;"><i></i></div>
<div class="l" style="left:136px;top:725px;width:11px;height:14px;line-height:14px;font-size:10.2px;font-weight:bold;letter-spacing:-0.26px;">B0</div>
<div class="l" style="left:246.5px;top:725px;width:3.5px;height:14px;line-height:14px;letter-spacing:-0.98px;">K</div>
<div class="l" style="left:284.4px;top:725px;width:20.6px;height:14px;line-height:14px;letter-spacing:0.14px;letter-spacing:0.3px;">dozownik</div>
<div class="c" style="left:634px;top:725px;width:61px;height:14px;line-height:14px;letter-spacing:0.05px;">72</div>
<div class="c" style="left:695px;top:725px;width:54px;height:14px;line-height:14px;letter-spacing:0.05px;">36</div>
<div class="c" style="left:749px;top:725px;width:56px;height:14px;line-height:14px;letter-spacing:0.05px;">64</div>
<div class="c" style="left:805px;top:725px;width:49px;height:14px;line-height:14px;letter-spacing:0.05px;">30</div>
<div class="c" style="left:854px;top:725px;width:52px;height:14px;line-height:14px;letter-spacing:0.06px;">-5</div>
<div class="c" style="left:906px;top:725px;width:58px;height:14px;line-height:14px;letter-spacing:0.05px;">60</div>
<div class="c" style="left:964px;top:725px;width:51px;height:14px;line-height:14px;letter-spacing:0.05px;">9</div>
<div class="c" style="left:1016px;top:725px;width:67px;height:14px;line-height:14px;letter-spacing:0.05px;">0</div>
<div class="c" style="left:1083px;top:723.7px;width:82px;height:14px;line-height:14px;letter-spacing:-0.49px;">0%</div>
<div class="c" style="left:1165px;top:725px;width:43px;height:14px;line-height:14px;letter-spacing:0.03px;">2,30</div>
<div class="c" style="left:1207px;top:725px;width:42px;height:14px;line-height:14px;letter-spacing:0.05px;">0</div>
<div style="left:1334px;top:723px;width:1px;height:16px;background:repeating-linear-gradient(#000 0,#000 2px,#fff 2px,#fff 3px)"></div>
<div style="left:1335px;top:724px;width:26px;height:13px;border:1px solid #ff5a5f;background:linear-gradient(90deg,#ff5a5f,#ffdcdd)"></div>
<div class="r" style="left:1302px;top:725px;width:58px;height:14px;line-height:14px;letter-spacing:-0.31px;">42%</div>
<div class="c" style="left:1362px;top:725px;width:66px;height:14px;line-height:14px;letter-spacing:-0.17px;">-213%</div>
<div class="c" style="left:1429px;top:725px;width:46px;height:14px;line-height:14px;letter-spacing:0.05px;">75</div>
<div class="l" style="left:35px;top:742px;width:24px;height:14px;line-height:14px;font-size:10.2px;font-weight:bold;letter-spacing:-0.44px;">PanFBA</div>
<div class="r" style="left:62px;top:742px;width:57px;height:14px;line-height:14px;letter-spacing:0.05px;">121439</div>
<div class="mb" style="left:74px;top:745.5px;width:7px;height:7px;"><i></i></div>
<div class="mb" style="left:127px;top:745.5px;width:7px;height:7px;"><i></i></div>
<div class="l" style="left:136px;top:742px;width:11px;height:14px;line-height:14px;font-size:10.2px;font-weight:bold;letter-spacing:-0.26px;">B0</div>
<div class="l" style="left:246.5px;top:742px;width:3.5px;height:14px;line-height:14px;letter-spacing:-0.98px;">K</div>
<div class="l" style="left:284.4px;top:742px;width:20.6px;height:14px;line-height:14px;letter-spacing:-0.09px;letter-spacing:0.3px;">szklanki</div>
<div class="c" style="left:634px;top:742px;width:61px;height:14px;line-height:14px;letter-spacing:0.05px;">72</div>
<div class="c" style="left:695px;top:742px;width:54px;height:14px;line-height:14px;letter-spacing:0.05px;">36</div>
<div class="c" style="left:749px;top:742px;width:56px;height:14px;line-height:14px;letter-spacing:0.05px;">40</div>
<div class="c" style="left:805px;top:742px;width:49px;height:14px;line-height:14px;letter-spacing:0.05px;">12</div>
<div class="c" style="left:854px;top:742px;width:52px;height:14px;line-height:14px;letter-spacing:0.05px;">-29</div>
<div class="c" style="left:906px;top:742px;width:58px;height:14px;line-height:14px;letter-spacing:0.05px;">8</div>
<div class="c" style="left:964px;top:742px;width:51px;height:14px;line-height:14px;letter-spacing:0.05px;">14</div>
<div class="c" style="left:1016px;top:742px;width:67px;height:14px;line-height:14px;letter-spacing:0.05px;">0</div>
<div class="c" style="left:1083px;top:740.7px;width:82px;height:14px;line-height:14px;letter-spacing:-0.49px;">0%</div>
<div class="c" style="left:1165px;top:742px;width:43px;height:14px;line-height:14px;letter-spacing:0.03px;">1,27</div>
<div class="c" style="left:1207px;top:742px;width:42px;height:14px;line-height:14px;letter-spacing:0.05px;">0</div>
<div style="left:1334px;top:740px;width:1px;height:16px;background:repeating-linear-gradient(#000 0,#000 2px,#fff 2px,#fff 3px)"></div>
<div style="left:1335px;top:741px;width:26px;height:13px;border:1px solid #ff5a5f;background:linear-gradient(90deg,#ff5a5f,#ffdcdd)"></div>
<div class="r" style="left:1302px;top:742px;width:58px;height:14px;line-height:14px;letter-spacing:-0.31px;">17%</div>
<div class="c" style="left:1362px;top:742px;width:66px;height:14px;line-height:14px;letter-spacing:-0.17px;">-333%</div>
<div class="c" style="left:1429px;top:742px;width:46px;height:14px;line-height:14px;letter-spacing:0.05px;">98</div>
<div class="l" style="left:35px;top:759px;width:24px;height:14px;line-height:14px;font-size:10.2px;font-weight:bold;letter-spacing:-0.44px;">PanFBA</div>
<div class="r" style="left:62px;top:759px;width:57px;height:14px;line-height:14px;letter-spacing:0.05px;">128271</div>
<div class="mb" style="left:74px;top:762.5px;width:7px;height:7px;"><i></i></div>
<div class="mb" style="left:127px;top:762.5px;width:7px;height:7px;"><i></i></div>
<div class="l" style="left:136px;top:759px;width:100px;height:14px;line-height:14px;font-size:10.2px;font-weight:bold;letter-spacing:-0.13px;">B082MBKWKL</div>
<div class="l" style="left:246.5px;top:759px;width:386px;height:14px;line-height:14px;letter-spacing:-0.18px;">KARAY Kubek Bam 370ml 22281 4 szt. K125</div>
<div class="c" style="left:634px;top:759px;width:61px;height:14px;line-height:14px;letter-spacing:0.05px;">70</div>
<div class="c" style="left:695px;top:759px;width:54px;height:14px;line-height:14px;letter-spacing:0.05px;">35</div>
<div class="c" style="left:749px;top:759px;width:56px;height:14px;line-height:14px;letter-spacing:0.05px;">64</div>
<div class="c" style="left:805px;top:759px;width:49px;height:14px;line-height:14px;letter-spacing:0.05px;">46</div>
<div class="c" style="left:854px;top:759px;width:52px;height:14px;line-height:14px;letter-spacing:0.06px;">-3</div>
<div class="c" style="left:906px;top:759px;width:58px;height:14px;line-height:14px;letter-spacing:0.05px;">40</div>
<div class="c" style="left:964px;top:759px;width:51px;height:14px;line-height:14px;letter-spacing:0.05px;">9</div>
<div class="c" style="left:1016px;top:759px;width:67px;height:14px;line-height:14px;letter-spacing:0.05px;">0</div>
<div class="c" style="left:1083px;top:757.7px;width:82px;height:14px;line-height:14px;letter-spacing:-0.49px;">0%</div>
<div class="c" style="left:1207px;top:759px;width:42px;height:14px;line-height:14px;letter-spacing:0.05px;">0</div>
<div style="left:1334px;top:757px;width:1px;height:16px;background:repeating-linear-gradient(#000 0,#000 2px,#fff 2px,#fff 3px)"></div>
<div style="left:1335px;top:758px;width:26px;height:13px;border:1px solid #ff5a5f;background:linear-gradient(90deg,#ff5a5f,#ffdcdd)"></div>
<div class="r" style="left:1302px;top:759px;width:58px;height:14px;line-height:14px;letter-spacing:-0.31px;">33%</div>
<div class="c" style="left:1362px;top:759px;width:66px;height:14px;line-height:14px;letter-spacing:-0.17px;">-400%</div>
<div class="c" style="left:1429px;top:759px;width:46px;height:14px;line-height:14px;letter-spacing:0.05px;">1316</div>
<div style="left:1474px;top:756px;width:61px;height:18px;background:#ffc7ce"></div>
<div class="c" style="left:1474px;top:759px;width:61px;height:14px;line-height:14px;letter-spacing:-0.22px;color:#9c0006;">-94%</div>
<div style="left:147px;top:213px;width:83px;height:544px;background:#fff"></div>
<div style="left:250px;top:212px;width:31px;height:545px;background:#fff"></div>
<div style="left:305px;top:213px;width:327px;height:544px;background:#fff"></div>
<div style="left:435px;top:27px;width:760px;height:135px;background:#fff;border:1px solid #5b9bd5;"></div>
<div class="slh" style="left:443px;top:32px;width:120px;height:14px;letter-spacing:-0.36px;">MAG.Producent</div>
<div style="left:443px;top:50px;width:752px;height:1px;background:#5b9bd5"></div>
<svg width="14" height="13" viewBox="0 0 14 13" style="left:1144px;top:32px"><path d="M0.2 3.3l1.9 1.5 3.6-4.4M0.2 7.1l1.9 1.5 3.6-4.4M0.2 10.9l2.1 1.5 3.4-4.2" fill="none" stroke="#404040" stroke-width="1.15"/><path d="M6.8 2.6h6.3M6.8 6.6h6.3M6.8 10.8h6.3" stroke="#404040" stroke-width="1.2"/></svg>
<svg width="14" height="14" viewBox="0 0 14 14" style="left:1167px;top:32px"><path d="M0.6 0.6H13.4L8.4 6.7V13H5.8V6.7z" fill="#efefef" stroke="none"/><path d="M5.9 13.4V6.7L0.6 0.6H13.4L8.4 6.7" fill="none" stroke="#bcbcbc" stroke-width="1.1" stroke-linejoin="round"/><path d="M7.7 7.4l5.9 5.9M13.6 7.4l-5.9 5.9" stroke="#fff" stroke-width="2.4"/><path d="M7.9 7.6l5.6 5.6M13.5 7.6l-5.6 5.6" stroke="#c4c4c4" stroke-width="1"/></svg>
<div class="sb w" style="left:443px;top:54px;width:118px;height:21px;line-height:20.2px;"></div>
<div style="left:443px;top:151px;width:1px;height:2px;background:#e2e2e2"></div>
<div style="left:560px;top:151px;width:1px;height:2px;background:#e2e2e2"></div>
<div style="left:564.6px;top:151px;width:1px;height:2px;background:#e2e2e2"></div>
<div style="left:681.6px;top:151px;width:1px;height:2px;background:#e2e2e2"></div>
<div style="left:686.2px;top:151px;width:1px;height:2px;background:#e2e2e2"></div>
<div style="left:803.2px;top:151px;width:1px;height:2px;background:#e2e2e2"></div>
<div style="left:807.8px;top:151px;width:1px;height:2px;background:#e2e2e2"></div>
<div style="left:924.8px;top:151px;width:1px;height:2px;background:#e2e2e2"></div>
<div style="left:929.4px;top:151px;width:1px;height:2px;background:#e2e2e2"></div>
<div style="left:1046.4px;top:151px;width:1px;height:2px;background:#e2e2e2"></div>
<div style="left:1051px;top:151px;width:1px;height:2px;background:#e2e2e2"></div>
<div style="left:21px;top:26px;width:107px;height:131px;background:#fff;border-bottom:1px solid #ed7d31;"></div>
<div class="slh" style="left:28px;top:30px;width:50px;height:14px;letter-spacing:0.32px;">Prioryt...</div>
<div style="left:28px;top:48px;width:93px;height:1px;background:#ed7d31"></div>
<svg width="14" height="13" viewBox="0 0 14 13" style="left:78.7px;top:30.4px"><path d="M0.2 3.3l1.9 1.5 3.6-4.4M0.2 7.1l1.9 1.5 3.6-4.4M0.2 10.9l2.1 1.5 3.4-4.2" fill="none" stroke="#404040" stroke-width="1.15"/><path d="M6.8 2.6h6.3M6.8 6.6h6.3M6.8 10.8h6.3" stroke="#404040" stroke-width="1.2"/></svg>
<svg width="14" height="14" viewBox="0 0 14 14" style="left:104.6px;top:29.8px"><path d="M0.6 0.6H13.4L8.4 6.7V13H5.8V6.7z" fill="#efefef" stroke="none"/><path d="M5.9 13.4V6.7L0.6 0.6H13.4L8.4 6.7" fill="none" stroke="#bcbcbc" stroke-width="1.1" stroke-linejoin="round"/><path d="M7.7 7.4l5.9 5.9M13.6 7.4l-5.9 5.9" stroke="#fff" stroke-width="2.4"/><path d="M7.9 7.6l5.6 5.6M13.5 7.6l-5.6 5.6" stroke="#c4c4c4" stroke-width="1"/></svg>
<div class="sb o" style="left:28px;top:53px;width:94px;height:21px;line-height:20.2px;letter-spacing:0.13px;">Pozostałe</div>
<div class="sb o" style="left:28px;top:77px;width:94px;height:21px;line-height:20.2px;letter-spacing:0.47px;">Priorytet po...</div>
<div class="sb o" style="left:28px;top:101px;width:94px;height:21px;line-height:20.2px;letter-spacing:0.40px;">Wg paramet...</div>
<div class="sb lo" style="left:28px;top:125px;width:94px;height:21px;line-height:20.2px;letter-spacing:0.42px;">0</div>
<div style="left:199px;top:20px;width:105px;height:136px;background:#fff;border:1px solid #5b9bd5;"></div>
<div class="slh" style="left:202px;top:30px;width:50px;height:14px;letter-spacing:-0.21px;">Czy jest...</div>
<div style="left:202px;top:48px;width:95px;height:1px;background:#5b9bd5"></div>
<svg width="14" height="13" viewBox="0 0 14 13" style="left:255px;top:30px"><path d="M0.2 3.3l1.9 1.5 3.6-4.4M0.2 7.1l1.9 1.5 3.6-4.4M0.2 10.9l2.1 1.5 3.4-4.2" fill="none" stroke="#404040" stroke-width="1.15"/><path d="M6.8 2.6h6.3M6.8 6.6h6.3M6.8 10.8h6.3" stroke="#404040" stroke-width="1.2"/></svg>
<svg width="14" height="14" viewBox="0 0 14 14" style="left:281px;top:30px"><path d="M0.6 0.6H13.4L8.4 6.7V13H5.8V6.7z" fill="#f4f4f4" stroke="none"/><path d="M5.9 13.4V6.7L0.6 0.6H13.4L8.4 6.7" fill="none" stroke="#404040" stroke-width="1.1" stroke-linejoin="round"/><path d="M7.7 7.4l5.9 5.9M13.6 7.4l-5.9 5.9" stroke="#fff" stroke-width="2.4"/><path d="M7.9 7.6l5.6 5.6M13.5 7.6l-5.6 5.6" stroke="#e8212b" stroke-width="1"/></svg>
<div class="sb" style="left:201px;top:52px;width:97px;height:21px;line-height:20.2px;letter-spacing:-0.20px;">JEST W MAG</div>
<div class="sb w" style="left:201px;top:76px;width:97px;height:21px;line-height:20.2px;letter-spacing:0.41px;">NIE MA W M...</div>
<div class="sb g" style="left:201px;top:100px;width:97px;height:21px;line-height:20.2px;letter-spacing:0.42px;">0</div>
<div class="sb g" style="left:201px;top:124px;width:97px;height:21px;line-height:20.2px;letter-spacing:-0.39px;">JADĄ</div>
<div style="left:126px;top:20px;width:74px;height:136px;background:#fff;border:1px solid #5b9bd5;"></div>
<div class="slh" style="left:134px;top:30px;width:12px;height:14px;letter-spacing:0.31px;">...</div>
<div style="left:134px;top:48px;width:58px;height:1px;background:#5b9bd5"></div>
<svg width="14" height="13" viewBox="0 0 14 13" style="left:148.7px;top:29.6px"><path d="M0.2 3.3l1.9 1.5 3.6-4.4M0.2 7.1l1.9 1.5 3.6-4.4M0.2 10.9l2.1 1.5 3.4-4.2" fill="none" stroke="#404040" stroke-width="1.15"/><path d="M6.8 2.6h6.3M6.8 6.6h6.3M6.8 10.8h6.3" stroke="#404040" stroke-width="1.2"/></svg>
<svg width="14" height="14" viewBox="0 0 14 14" style="left:174.6px;top:29.8px"><path d="M0.6 0.6H13.4L8.4 6.7V13H5.8V6.7z" fill="#efefef" stroke="none"/><path d="M5.9 13.4V6.7L0.6 0.6H13.4L8.4 6.7" fill="none" stroke="#bcbcbc" stroke-width="1.1" stroke-linejoin="round"/><path d="M7.7 7.4l5.9 5.9M13.6 7.4l-5.9 5.9" stroke="#fff" stroke-width="2.4"/><path d="M7.9 7.6l5.6 5.6M13.5 7.6l-5.6 5.6" stroke="#c4c4c4" stroke-width="1"/></svg>
<div class="sb" style="left:133px;top:52px;width:60px;height:22px;line-height:21.2px;"></div>
<div class="sb" style="left:133px;top:77px;width:60px;height:22px;line-height:21.2px;letter-spacing:-0.57px;">KRZAK</div>
<div style="left:302px;top:27px;width:132px;height:128px;background:#fff;border:1px solid #5b9bd5;"></div>
<div class="slh" style="left:310px;top:33px;width:60px;height:14px;letter-spacing:0.28px;">Magazyn2</div>
<div style="left:310px;top:51px;width:116px;height:1px;background:#5b9bd5"></div>
<svg width="14" height="13" viewBox="0 0 14 13" style="left:383px;top:33px"><path d="M0.2 3.3l1.9 1.5 3.6-4.4M0.2 7.1l1.9 1.5 3.6-4.4M0.2 10.9l2.1 1.5 3.4-4.2" fill="none" stroke="#404040" stroke-width="1.15"/><path d="M6.8 2.6h6.3M6.8 6.6h6.3M6.8 10.8h6.3" stroke="#404040" stroke-width="1.2"/></svg>
<svg width="14" height="14" viewBox="0 0 14 14" style="left:410px;top:33px"><path d="M0.6 0.6H13.4L8.4 6.7V13H5.8V6.7z" fill="#f4f4f4" stroke="none"/><path d="M5.9 13.4V6.7L0.6 0.6H13.4L8.4 6.7" fill="none" stroke="#404040" stroke-width="1.1" stroke-linejoin="round"/><path d="M7.7 7.4l5.9 5.9M13.6 7.4l-5.9 5.9" stroke="#fff" stroke-width="2.4"/><path d="M7.9 7.6l5.6 5.6M13.5 7.6l-5.6 5.6" stroke="#e8212b" stroke-width="1"/></svg>
<div class="sb w" style="left:309.3px;top:54px;width:117px;height:21px;line-height:20.2px;letter-spacing:-0.37px;">GB</div>
<div class="sb" style="left:309.3px;top:78px;width:117px;height:21px;line-height:20.2px;letter-spacing:-0.22px;">PanFBA</div>
<div class="sb g" style="left:309.3px;top:102px;width:117px;height:21px;line-height:20.2px;letter-spacing:0.42px;">0</div>
<div style="left:1171px;top:25px;width:139px;height:78px;background:#fff;border:1px solid #5b9bd5;"></div>
<div class="slh" style="left:1179px;top:30px;width:70px;height:14px;letter-spacing:-0.07px;">Fullfilment</div>
<div style="left:1179px;top:48px;width:123px;height:1px;background:#5b9bd5"></div>
<svg width="14" height="13" viewBox="0 0 14 13" style="left:1259px;top:30px"><path d="M0.2 3.3l1.9 1.5 3.6-4.4M0.2 7.1l1.9 1.5 3.6-4.4M0.2 10.9l2.1 1.5 3.4-4.2" fill="none" stroke="#404040" stroke-width="1.15"/><path d="M6.8 2.6h6.3M6.8 6.6h6.3M6.8 10.8h6.3" stroke="#404040" stroke-width="1.2"/></svg>
<svg width="14" height="14" viewBox="0 0 14 14" style="left:1285px;top:30px"><path d="M0.6 0.6H13.4L8.4 6.7V13H5.8V6.7z" fill="#efefef" stroke="none"/><path d="M5.9 13.4V6.7L0.6 0.6H13.4L8.4 6.7" fill="none" stroke="#bcbcbc" stroke-width="1.1" stroke-linejoin="round"/><path d="M7.7 7.4l5.9 5.9M13.6 7.4l-5.9 5.9" stroke="#fff" stroke-width="2.4"/><path d="M7.9 7.6l5.6 5.6M13.5 7.6l-5.6 5.6" stroke="#c4c4c4" stroke-width="1"/></svg>
<div class="sb" style="left:1178px;top:52px;width:106px;height:22px;line-height:21.2px;letter-spacing:0.40px;">Okimany</div>
<div class="sb" style="left:1178px;top:77px;width:106px;height:22px;line-height:21.2px;letter-spacing:0.65px;">#N/D</div>
<div style="left:1287px;top:52px;width:14px;height:48px;background:#f0f0f0"></div>
<svg width="14" height="8" viewBox="0 0 14 8" style="left:1287px;top:56px"><path d="M3.5 6l3.5-3.5 3.5 3.5" fill="none" stroke="#3c3c3c" stroke-width="1.7"/></svg>
<svg width="14" height="8" viewBox="0 0 14 8" style="left:1287px;top:86.5px"><path d="M3.5 2l3.5 3.5 3.5-3.5" fill="none" stroke="#3c3c3c" stroke-width="1.7"/></svg>
<div style="left:1288px;top:68px;width:12px;height:9px;background:#c8c8c8"></div>
<div style="left:1309px;top:25px;width:155px;height:78px;background:#fff;border:1px solid #5b9bd5;"></div>
<div class="slh" style="left:1315px;top:30px;width:95px;height:14px;letter-spacing:-0.16px;">BRAK W OPISIE</div>
<div style="left:1315px;top:48px;width:141px;height:1px;background:#5b9bd5"></div>
<svg width="14" height="13" viewBox="0 0 14 13" style="left:1413px;top:30px"><path d="M0.2 3.3l1.9 1.5 3.6-4.4M0.2 7.1l1.9 1.5 3.6-4.4M0.2 10.9l2.1 1.5 3.4-4.2" fill="none" stroke="#404040" stroke-width="1.15"/><path d="M6.8 2.6h6.3M6.8 6.6h6.3M6.8 10.8h6.3" stroke="#404040" stroke-width="1.2"/></svg>
<svg width="14" height="14" viewBox="0 0 14 14" style="left:1438px;top:30px"><path d="M0.6 0.6H13.4L8.4 6.7V13H5.8V6.7z" fill="#efefef" stroke="none"/><path d="M5.9 13.4V6.7L0.6 0.6H13.4L8.4 6.7" fill="none" stroke="#bcbcbc" stroke-width="1.1" stroke-linejoin="round"/><path d="M7.7 7.4l5.9 5.9M13.6 7.4l-5.9 5.9" stroke="#fff" stroke-width="2.4"/><path d="M7.9 7.6l5.6 5.6M13.5 7.6l-5.6 5.6" stroke="#c4c4c4" stroke-width="1"/></svg>
<div class="sb" style="left:1315px;top:52px;width:122px;height:22px;line-height:21.2px;letter-spacing:-0.28px;">BRAK W OPISIE</div>
<div class="sb" style="left:1315px;top:77px;width:122px;height:22px;line-height:21.2px;letter-spacing:-0.33px;">OK</div>
<div style="left:1441px;top:52px;width:14px;height:48px;background:#f0f0f0"></div>
<svg width="14" height="8" viewBox="0 0 14 8" style="left:1441px;top:56px"><path d="M3.5 6l3.5-3.5 3.5 3.5" fill="none" stroke="#3c3c3c" stroke-width="1.7"/></svg>
<svg width="14" height="8" viewBox="0 0 14 8" style="left:1441px;top:86.5px"><path d="M3.5 2l3.5 3.5 3.5-3.5" fill="none" stroke="#3c3c3c" stroke-width="1.7"/></svg>
<div style="left:1442px;top:68px;width:12px;height:9px;background:#c8c8c8"></div>
<div style="left:1173px;top:100px;width:294px;height:59px;background:#fff;border:1px solid #5b9bd5;"></div>
<div class="slh" style="left:1181px;top:105px;width:120px;height:14px;letter-spacing:-0.09px;">Stan minimalny</div>
<div style="left:1181px;top:123px;width:278px;height:1px;background:#5b9bd5"></div>
<svg width="14" height="13" viewBox="0 0 14 13" style="left:1416px;top:105px"><path d="M0.2 3.3l1.9 1.5 3.6-4.4M0.2 7.1l1.9 1.5 3.6-4.4M0.2 10.9l2.1 1.5 3.4-4.2" fill="none" stroke="#404040" stroke-width="1.15"/><path d="M6.8 2.6h6.3M6.8 6.6h6.3M6.8 10.8h6.3" stroke="#404040" stroke-width="1.2"/></svg>
<svg width="14" height="14" viewBox="0 0 14 14" style="left:1442px;top:105px"><path d="M0.6 0.6H13.4L8.4 6.7V13H5.8V6.7z" fill="#efefef" stroke="none"/><path d="M5.9 13.4V6.7L0.6 0.6H13.4L8.4 6.7" fill="none" stroke="#bcbcbc" stroke-width="1.1" stroke-linejoin="round"/><path d="M7.7 7.4l5.9 5.9M13.6 7.4l-5.9 5.9" stroke="#fff" stroke-width="2.4"/><path d="M7.9 7.6l5.6 5.6M13.5 7.6l-5.6 5.6" stroke="#c4c4c4" stroke-width="1"/></svg>
<div class="sb" style="left:1180px;top:127px;width:128px;height:22px;line-height:21.2px;letter-spacing:-0.11px;">Jest</div>
<div class="sb" style="left:1311px;top:127px;width:128px;height:22px;line-height:21.2px;letter-spacing:0.05px;">Kończy się</div>
<div style="left:1444px;top:127px;width:15px;height:24px;background:#f0f0f0"></div>
<svg width="15" height="8" viewBox="0 0 15 8" style="left:1444px;top:130.5px"><path d="M4.0 6l3.5-3.5 3.5 3.5" fill="none" stroke="#3c3c3c" stroke-width="1.7"/></svg>
<svg width="15" height="8" viewBox="0 0 15 8" style="left:1444px;top:141px"><path d="M4.0 2l3.5 3.5 3.5-3.5" fill="none" stroke="#3c3c3c" stroke-width="1.7"/></svg>
<div style="left:1590px;top:25px;width:168px;height:134px;background:#fff;border:1px solid #5b9bd5;"></div>
<div class="slh" style="left:1599px;top:30px;width:105px;height:14px;letter-spacing:-0.00px;">Przyszły miesiąc</div>
<div style="left:1599px;top:48px;width:151px;height:1px;background:#5b9bd5"></div>
<svg width="14" height="13" viewBox="0 0 14 13" style="left:1707px;top:30px"><path d="M0.2 3.3l1.9 1.5 3.6-4.4M0.2 7.1l1.9 1.5 3.6-4.4M0.2 10.9l2.1 1.5 3.4-4.2" fill="none" stroke="#404040" stroke-width="1.15"/><path d="M6.8 2.6h6.3M6.8 6.6h6.3M6.8 10.8h6.3" stroke="#404040" stroke-width="1.2"/></svg>
<svg width="14" height="14" viewBox="0 0 14 14" style="left:1733px;top:30px"><path d="M0.6 0.6H13.4L8.4 6.7V13H5.8V6.7z" fill="#efefef" stroke="none"/><path d="M5.9 13.4V6.7L0.6 0.6H13.4L8.4 6.7" fill="none" stroke="#bcbcbc" stroke-width="1.1" stroke-linejoin="round"/><path d="M7.7 7.4l5.9 5.9M13.6 7.4l-5.9 5.9" stroke="#fff" stroke-width="2.4"/><path d="M7.9 7.6l5.6 5.6M13.5 7.6l-5.6 5.6" stroke="#c4c4c4" stroke-width="1"/></svg>
<div class="sb" style="left:1599px;top:53px;width:151px;height:21px;line-height:18.4px;letter-spacing:0.13px;">Pozostałe</div>
<div class="sb" style="left:1599px;top:77px;width:151px;height:21px;line-height:18.4px;">Przyszły</div>
<div class="sb lb" style="left:1599px;top:101px;width:151px;height:21px;line-height:18.4px;letter-spacing:0.42px;">0</div>
<div style="left:1477px;top:26px;width:121px;height:134px;background:#fff;border:1px solid #5b9bd5;"></div>
<div class="slh" style="left:1485px;top:31px;width:60px;height:14px;letter-spacing:0.20px;">Stan zer...</div>
<div style="left:1485px;top:49px;width:105px;height:1px;background:#5b9bd5"></div>
<svg width="14" height="13" viewBox="0 0 14 13" style="left:1547px;top:31px"><path d="M0.2 3.3l1.9 1.5 3.6-4.4M0.2 7.1l1.9 1.5 3.6-4.4M0.2 10.9l2.1 1.5 3.4-4.2" fill="none" stroke="#404040" stroke-width="1.15"/><path d="M6.8 2.6h6.3M6.8 6.6h6.3M6.8 10.8h6.3" stroke="#404040" stroke-width="1.2"/></svg>
<svg width="14" height="14" viewBox="0 0 14 14" style="left:1573px;top:31px"><path d="M0.6 0.6H13.4L8.4 6.7V13H5.8V6.7z" fill="#efefef" stroke="none"/><path d="M5.9 13.4V6.7L0.6 0.6H13.4L8.4 6.7" fill="none" stroke="#bcbcbc" stroke-width="1.1" stroke-linejoin="round"/><path d="M7.7 7.4l5.9 5.9M13.6 7.4l-5.9 5.9" stroke="#fff" stroke-width="2.4"/><path d="M7.9 7.6l5.6 5.6M13.5 7.6l-5.6 5.6" stroke="#c4c4c4" stroke-width="1"/></svg>
<div class="sb" style="left:1485px;top:53px;width:106px;height:22px;line-height:21.2px;letter-spacing:-0.33px;">OK</div>
<div class="sb" style="left:1485px;top:78px;width:106px;height:22px;line-height:21.2px;letter-spacing:-0.70px;">ZERO</div>
<div class="sb lb" style="left:1485px;top:103px;width:106px;height:22px;line-height:21.2px;letter-spacing:0.42px;">0</div>
<div style="left:1750px;top:25px;width:160px;height:132px;background:#fff;border:1px solid #5b9bd5;"></div>
<div class="slh" style="left:1758px;top:30px;width:100px;height:14px;letter-spacing:-0.23px;">DO pokrycia4</div>
<div style="left:1758px;top:48px;width:150px;height:1px;background:#5b9bd5"></div>
<svg width="14" height="13" viewBox="0 0 14 13" style="left:1864px;top:30px"><path d="M0.2 3.3l1.9 1.5 3.6-4.4M0.2 7.1l1.9 1.5 3.6-4.4M0.2 10.9l2.1 1.5 3.4-4.2" fill="none" stroke="#404040" stroke-width="1.15"/><path d="M6.8 2.6h6.3M6.8 6.6h6.3M6.8 10.8h6.3" stroke="#404040" stroke-width="1.2"/></svg>
<svg width="14" height="14" viewBox="0 0 14 14" style="left:1889px;top:30px"><path d="M0.6 0.6H13.4L8.4 6.7V13H5.8V6.7z" fill="#f4f4f4" stroke="none"/><path d="M5.9 13.4V6.7L0.6 0.6H13.4L8.4 6.7" fill="none" stroke="#404040" stroke-width="1.1" stroke-linejoin="round"/><path d="M7.7 7.4l5.9 5.9M13.6 7.4l-5.9 5.9" stroke="#fff" stroke-width="2.4"/><path d="M7.9 7.6l5.6 5.6M13.5 7.6l-5.6 5.6" stroke="#e8212b" stroke-width="1"/></svg>
<div class="sb" style="left:1758px;top:53px;width:150px;height:21px;line-height:20.2px;letter-spacing:0.21px;">&lt;1</div>
<div class="sb w" style="left:1758px;top:78px;width:150px;height:21px;line-height:20.2px;letter-spacing:0.18px;">większe 0</div>
<div class="sb g" style="left:1758px;top:102px;width:150px;height:21px;line-height:20.2px;letter-spacing:0.28px;">&lt;10</div>
<div class="sb g" style="left:1758px;top:127px;width:150px;height:21px;line-height:20.2px;letter-spacing:0.21px;">większe 10</div>
<div style="left:1346px;top:159px;width:16px;height:2px;background:#d9d9d9"></div>
<div style="left:21px;top:212px;width:1875px;height:1px;background:#9b9b9b"></div>
<div style="left:244px;top:26px;width:1px;height:738px;background:#8a8a8a"></div>
<div style="left:0px;top:0px;width:1902px;height:26px;background:#e6e6e6"></div>
<div style="left:0px;top:25px;width:1897px;height:1px;background:#9b9b9b"></div>
<div style="left:121px;top:10px;width:123px;height:15px;background:#9fd5b7"></div>
<div style="left:634px;top:10px;width:61px;height:15px;background:#d2d2d2;border-bottom:2px solid #217346"></div>
<div class="ch" style="left:21px;top:11px;width:37px;height:15px;overflow:hidden;letter-spacing:-0.28px;">A</div>
<div class="ch" style="left:62px;top:11px;width:59px;height:15px;overflow:hidden;letter-spacing:-1.40px;">C</div>
<div class="ch" style="left:121px;top:11px;width:123px;height:15px;overflow:hidden;letter-spacing:-0.44px;">D</div>
<div class="ch" style="left:244px;top:11px;width:390px;height:15px;overflow:hidden;letter-spacing:-1.34px;">E</div>
<div class="ch" style="left:634px;top:11px;width:61px;height:15px;color:#217346;overflow:hidden;letter-spacing:-1.09px;">F</div>
<div class="ch" style="left:695px;top:11px;width:54px;height:15px;overflow:hidden;letter-spacing:-0.84px;">G</div>
<div class="ch" style="left:749px;top:11px;width:56px;height:15px;overflow:hidden;letter-spacing:-0.35px;">H</div>
<div class="ch" style="left:805px;top:11px;width:49px;height:15px;overflow:hidden;">I</div>
<div class="ch" style="left:854px;top:11px;width:52px;height:15px;overflow:hidden;letter-spacing:-1.56px;">J</div>
<div class="ch" style="left:906px;top:11px;width:58px;height:15px;overflow:hidden;letter-spacing:-0.98px;">K</div>
<div class="ch" style="left:964px;top:11px;width:51px;height:15px;overflow:hidden;letter-spacing:-0.96px;">L</div>
<div class="ch" style="left:1016px;top:11px;width:67px;height:15px;overflow:hidden;letter-spacing:-0.48px;">O</div>
<div class="ch" style="left:1083px;top:11px;width:82px;height:15px;overflow:hidden;letter-spacing:-1.01px;">P</div>
<div class="ch" style="left:1165px;top:11px;width:42px;height:15px;overflow:hidden;letter-spacing:-0.35px;">Q</div>
<div class="ch" style="left:1207px;top:11px;width:42px;height:15px;overflow:hidden;letter-spacing:-1.29px;">R</div>
<div class="ch" style="left:1251px;top:11px;width:55px;height:15px;overflow:hidden;letter-spacing:-0.76px;">T</div>
<div class="ch" style="left:1306px;top:11px;width:56px;height:15px;overflow:hidden;letter-spacing:-0.13px;">U</div>
<div class="ch" style="left:1362px;top:11px;width:66px;height:15px;overflow:hidden;letter-spacing:-0.41px;">V</div>
<div class="ch" style="left:1429px;top:11px;width:46px;height:15px;overflow:hidden;letter-spacing:0.43px;">W</div>
<div class="ch" style="left:1474px;top:11px;width:61px;height:15px;overflow:hidden;letter-spacing:-0.98px;">X</div>
<div class="ch" style="left:1535px;top:11px;width:60px;height:15px;overflow:hidden;letter-spacing:-1.35px;">Y</div>
<div class="ch" style="left:1595px;top:11px;width:54px;height:15px;overflow:hidden;letter-spacing:-0.98px;">Z</div>
<div class="ch" style="left:1649px;top:11px;width:54px;height:15px;overflow:hidden;letter-spacing:-0.28px;">AA</div>
<div class="ch" style="left:1703px;top:11px;width:54px;height:15px;overflow:hidden;letter-spacing:-0.49px;">AB</div>
<div class="ch" style="left:1757px;top:11px;width:54px;height:15px;overflow:hidden;letter-spacing:-0.89px;">AC</div>
<div class="ch" style="left:1811px;top:11px;width:54px;height:15px;overflow:hidden;letter-spacing:-0.36px;">AD</div>
<div class="ch" style="left:1865px;top:11px;width:54px;height:15px;overflow:hidden;letter-spacing:-0.81px;">AE</div>
<div style="left:20px;top:11px;width:1px;height:14px;background:linear-gradient(#dedede,#a4a4a4)"></div>
<div style="left:58px;top:11px;width:1px;height:14px;background:linear-gradient(#dedede,#a4a4a4)"></div>
<div style="left:62px;top:11px;width:1px;height:14px;background:linear-gradient(#dedede,#a4a4a4)"></div>
<div style="left:121px;top:11px;width:1px;height:14px;background:linear-gradient(#dedede,#a4a4a4)"></div>
<div style="left:244px;top:11px;width:1px;height:14px;background:linear-gradient(#dedede,#a4a4a4)"></div>
<div style="left:634px;top:11px;width:1px;height:14px;background:linear-gradient(#dedede,#a4a4a4)"></div>
<div style="left:695px;top:11px;width:1px;height:14px;background:linear-gradient(#dedede,#a4a4a4)"></div>
<div style="left:749px;top:11px;width:1px;height:14px;background:linear-gradient(#dedede,#a4a4a4)"></div>
<div style="left:805px;top:11px;width:1px;height:14px;background:linear-gradient(#dedede,#a4a4a4)"></div>
<div style="left:854px;top:11px;width:1px;height:14px;background:linear-gradient(#dedede,#a4a4a4)"></div>
<div style="left:906px;top:11px;width:1px;height:14px;background:linear-gradient(#dedede,#a4a4a4)"></div>
<div style="left:964px;top:11px;width:1px;height:14px;background:linear-gradient(#dedede,#a4a4a4)"></div>
<div style="left:1013px;top:11px;width:1px;height:14px;background:linear-gradient(#dedede,#a4a4a4)"></div>
<div style="left:1017px;top:11px;width:1px;height:14px;background:linear-gradient(#dedede,#a4a4a4)"></div>
<div style="left:1083px;top:11px;width:1px;height:14px;background:linear-gradient(#dedede,#a4a4a4)"></div>
<div style="left:1165px;top:11px;width:1px;height:14px;background:linear-gradient(#dedede,#a4a4a4)"></div>
<div style="left:1207px;top:11px;width:1px;height:14px;background:linear-gradient(#dedede,#a4a4a4)"></div>
<div style="left:1246px;top:11px;width:1px;height:14px;background:linear-gradient(#dedede,#a4a4a4)"></div>
<div style="left:1250px;top:11px;width:1px;height:14px;background:linear-gradient(#dedede,#a4a4a4)"></div>
<div style="left:1306px;top:11px;width:1px;height:14px;background:linear-gradient(#dedede,#a4a4a4)"></div>
<div style="left:1362px;top:11px;width:1px;height:14px;background:linear-gradient(#dedede,#a4a4a4)"></div>
<div style="left:1428px;top:11px;width:1px;height:14px;background:linear-gradient(#dedede,#a4a4a4)"></div>
<div style="left:1474px;top:11px;width:1px;height:14px;background:linear-gradient(#dedede,#a4a4a4)"></div>
<div style="left:1535px;top:11px;width:1px;height:14px;background:linear-gradient(#dedede,#a4a4a4)"></div>
<div style="left:1595px;top:11px;width:1px;height:14px;background:linear-gradient(#dedede,#a4a4a4)"></div>
<div style="left:1649px;top:11px;width:1px;height:14px;background:linear-gradient(#dedede,#a4a4a4)"></div>
<div style="left:1703px;top:11px;width:1px;height:14px;background:linear-gradient(#dedede,#a4a4a4)"></div>
<div style="left:1757px;top:11px;width:1px;height:14px;background:linear-gradient(#dedede,#a4a4a4)"></div>
<div style="left:1811px;top:11px;width:1px;height:14px;background:linear-gradient(#dedede,#a4a4a4)"></div>
<div style="left:1865px;top:11px;width:1px;height:14px;background:linear-gradient(#dedede,#a4a4a4)"></div>
<svg width="8" height="7" viewBox="0 0 8 7" style="left:9.2px;top:14.6px"><path d="M7.6 0v6.8h-7.6z" fill="#b4b4b4"/></svg>
<div style="left:0px;top:26px;width:21px;height:738px;background:#e6e6e6;border-right:1px solid #9b9b9b"></div>
<div style="left:0px;top:42px;width:20px;height:1px;background:linear-gradient(90deg,#dedede,#a4a4a4)"></div>
<div class="rh" style="left:-1px;top:28px;width:20px;height:14px;line-height:14px;overflow:hidden;letter-spacing:0.05px;">1</div>
<div style="left:0px;top:59px;width:20px;height:1px;background:linear-gradient(90deg,#dedede,#a4a4a4)"></div>
<div class="rh" style="left:-1px;top:45px;width:20px;height:14px;line-height:14px;overflow:hidden;letter-spacing:0.05px;">2</div>
<div style="left:0px;top:76px;width:20px;height:1px;background:linear-gradient(90deg,#dedede,#a4a4a4)"></div>
<div class="rh" style="left:-1px;top:62px;width:20px;height:14px;line-height:14px;overflow:hidden;letter-spacing:0.05px;">3</div>
<div style="left:0px;top:93px;width:20px;height:1px;background:linear-gradient(90deg,#dedede,#a4a4a4)"></div>
<div class="rh" style="left:-1px;top:79px;width:20px;height:14px;line-height:14px;overflow:hidden;letter-spacing:0.05px;">4</div>
<div style="left:0px;top:110px;width:20px;height:1px;background:linear-gradient(90deg,#dedede,#a4a4a4)"></div>
<div class="rh" style="left:-1px;top:96px;width:20px;height:14px;line-height:14px;overflow:hidden;letter-spacing:0.05px;">5</div>
<div style="left:0px;top:127px;width:20px;height:1px;background:linear-gradient(90deg,#dedede,#a4a4a4)"></div>
<div class="rh" style="left:-1px;top:113px;width:20px;height:14px;line-height:14px;overflow:hidden;letter-spacing:0.05px;">6</div>
<div style="left:0px;top:144px;width:20px;height:1px;background:linear-gradient(90deg,#dedede,#a4a4a4)"></div>
<div class="rh" style="left:-1px;top:130px;width:20px;height:14px;line-height:14px;overflow:hidden;letter-spacing:0.05px;">7</div>
<div style="left:0px;top:161px;width:20px;height:1px;background:linear-gradient(90deg,#dedede,#a4a4a4)"></div>
<div class="rh" style="left:-1px;top:147px;width:20px;height:14px;line-height:14px;overflow:hidden;letter-spacing:0.05px;">8</div>
<div style="left:0px;top:212px;width:20px;height:1px;background:linear-gradient(90deg,#dedede,#a4a4a4)"></div>
<div class="rh" style="left:-1px;top:198px;width:20px;height:14px;line-height:14px;overflow:hidden;letter-spacing:0.05px;">9</div>
<div style="left:0px;top:231px;width:20px;height:1px;background:linear-gradient(90deg,#dedede,#a4a4a4)"></div>
<div class="rh" style="left:-1px;top:217px;width:20px;height:14px;line-height:14px;overflow:hidden;letter-spacing:0.05px;">10</div>
<div style="left:0px;top:246px;width:20px;height:1px;background:linear-gradient(90deg,#dedede,#a4a4a4)"></div>
<div class="rh" style="left:-1px;top:232px;width:20px;height:14px;line-height:14px;overflow:hidden;letter-spacing:0.44px;">11</div>
<div style="left:0px;top:263px;width:20px;height:1px;background:linear-gradient(90deg,#dedede,#a4a4a4)"></div>
<div class="rh" style="left:-1px;top:249px;width:20px;height:14px;line-height:14px;overflow:hidden;letter-spacing:0.05px;">12</div>
<div style="left:0px;top:280px;width:20px;height:1px;background:linear-gradient(90deg,#dedede,#a4a4a4)"></div>
<div class="rh" style="left:-1px;top:266px;width:20px;height:14px;line-height:14px;overflow:hidden;letter-spacing:0.05px;">13</div>
<div style="left:0px;top:297px;width:20px;height:1px;background:linear-gradient(90deg,#dedede,#a4a4a4)"></div>
<div class="rh" style="left:-1px;top:283px;width:20px;height:14px;line-height:14px;overflow:hidden;letter-spacing:0.05px;">14</div>
<div style="left:0px;top:314px;width:20px;height:1px;background:linear-gradient(90deg,#dedede,#a4a4a4)"></div>
<div class="rh" style="left:-1px;top:300px;width:20px;height:14px;line-height:14px;overflow:hidden;letter-spacing:0.05px;">15</div>
<div style="left:0px;top:331px;width:20px;height:1px;background:linear-gradient(90deg,#dedede,#a4a4a4)"></div>
<div class="rh" style="left:-1px;top:317px;width:20px;height:14px;line-height:14px;overflow:hidden;letter-spacing:0.05px;">16</div>
<div style="left:0px;top:348px;width:20px;height:1px;background:linear-gradient(90deg,#dedede,#a4a4a4)"></div>
<div class="rh" style="left:-1px;top:334px;width:20px;height:14px;line-height:14px;overflow:hidden;letter-spacing:0.05px;">17</div>
<div style="left:0px;top:365px;width:20px;height:1px;background:linear-gradient(90deg,#dedede,#a4a4a4)"></div>
<div class="rh" style="left:-1px;top:351px;width:20px;height:14px;line-height:14px;overflow:hidden;letter-spacing:0.05px;">18</div>
<div style="left:0px;top:382px;width:20px;height:1px;background:linear-gradient(90deg,#dedede,#a4a4a4)"></div>
<div class="rh" style="left:-1px;top:368px;width:20px;height:14px;line-height:14px;overflow:hidden;letter-spacing:0.05px;">19</div>
<div style="left:0px;top:399px;width:20px;height:1px;background:linear-gradient(90deg,#dedede,#a4a4a4)"></div>
<div class="rh" style="left:-1px;top:385px;width:20px;height:14px;line-height:14px;overflow:hidden;letter-spacing:0.05px;">20</div>
<div style="left:0px;top:416px;width:20px;height:1px;background:linear-gradient(90deg,#dedede,#a4a4a4)"></div>
<div class="rh" style="left:-1px;top:402px;width:20px;height:14px;line-height:14px;overflow:hidden;letter-spacing:0.05px;">21</div>
<div style="left:0px;top:433px;width:20px;height:1px;background:linear-gradient(90deg,#dedede,#a4a4a4)"></div>
<div class="rh" style="left:-1px;top:419px;width:20px;height:14px;line-height:14px;overflow:hidden;letter-spacing:0.05px;">22</div>
<div style="left:0px;top:450px;width:20px;height:1px;background:linear-gradient(90deg,#dedede,#a4a4a4)"></div>
<div class="rh" style="left:-1px;top:436px;width:20px;height:14px;line-height:14px;overflow:hidden;letter-spacing:0.05px;">23</div>
<div style="left:0px;top:467px;width:20px;height:1px;background:linear-gradient(90deg,#dedede,#a4a4a4)"></div>
<div class="rh" style="left:-1px;top:453px;width:20px;height:14px;line-height:14px;overflow:hidden;letter-spacing:0.05px;">24</div>
<div style="left:0px;top:484px;width:20px;height:1px;background:linear-gradient(90deg,#dedede,#a4a4a4)"></div>
<div class="rh" style="left:-1px;top:470px;width:20px;height:14px;line-height:14px;overflow:hidden;letter-spacing:0.05px;">25</div>
<div style="left:0px;top:501px;width:20px;height:1px;background:linear-gradient(90deg,#dedede,#a4a4a4)"></div>
<div class="rh" style="left:-1px;top:487px;width:20px;height:14px;line-height:14px;overflow:hidden;letter-spacing:0.05px;">26</div>
<div style="left:0px;top:518px;width:20px;height:1px;background:linear-gradient(90deg,#dedede,#a4a4a4)"></div>
<div class="rh" style="left:-1px;top:504px;width:20px;height:14px;line-height:14px;overflow:hidden;letter-spacing:0.05px;">27</div>
<div style="left:0px;top:535px;width:20px;height:1px;background:linear-gradient(90deg,#dedede,#a4a4a4)"></div>
<div class="rh" style="left:-1px;top:521px;width:20px;height:14px;line-height:14px;overflow:hidden;letter-spacing:0.05px;">28</div>
<div style="left:0px;top:552px;width:20px;height:1px;background:linear-gradient(90deg,#dedede,#a4a4a4)"></div>
<div class="rh" style="left:-1px;top:538px;width:20px;height:14px;line-height:14px;overflow:hidden;letter-spacing:0.05px;">29</div>
<div style="left:0px;top:569px;width:20px;height:1px;background:linear-gradient(90deg,#dedede,#a4a4a4)"></div>
<div class="rh" style="left:-1px;top:555px;width:20px;height:14px;line-height:14px;overflow:hidden;letter-spacing:0.05px;">30</div>
<div style="left:0px;top:586px;width:20px;height:1px;background:linear-gradient(90deg,#dedede,#a4a4a4)"></div>
<div class="rh" style="left:-1px;top:572px;width:20px;height:14px;line-height:14px;overflow:hidden;letter-spacing:0.05px;">31</div>
<div style="left:0px;top:603px;width:20px;height:1px;background:linear-gradient(90deg,#dedede,#a4a4a4)"></div>
<div class="rh" style="left:-1px;top:589px;width:20px;height:14px;line-height:14px;overflow:hidden;letter-spacing:0.05px;">32</div>
<div style="left:0px;top:620px;width:20px;height:1px;background:linear-gradient(90deg,#dedede,#a4a4a4)"></div>
<div class="rh" style="left:-1px;top:606px;width:20px;height:14px;line-height:14px;overflow:hidden;letter-spacing:0.05px;">33</div>
<div style="left:0px;top:637px;width:20px;height:1px;background:linear-gradient(90deg,#dedede,#a4a4a4)"></div>
<div class="rh" style="left:-1px;top:623px;width:20px;height:14px;line-height:14px;overflow:hidden;letter-spacing:0.05px;">34</div>
<div style="left:0px;top:654px;width:20px;height:1px;background:linear-gradient(90deg,#dedede,#a4a4a4)"></div>
<div class="rh" style="left:-1px;top:640px;width:20px;height:14px;line-height:14px;overflow:hidden;letter-spacing:0.05px;">35</div>
<div style="left:0px;top:671px;width:20px;height:1px;background:linear-gradient(90deg,#dedede,#a4a4a4)"></div>
<div class="rh" style="left:-1px;top:657px;width:20px;height:14px;line-height:14px;overflow:hidden;letter-spacing:0.05px;">36</div>
<div style="left:0px;top:688px;width:20px;height:1px;background:linear-gradient(90deg,#dedede,#a4a4a4)"></div>
<div class="rh" style="left:-1px;top:674px;width:20px;height:14px;line-height:14px;overflow:hidden;letter-spacing:0.05px;">37</div>
<div style="left:0px;top:705px;width:20px;height:1px;background:linear-gradient(90deg,#dedede,#a4a4a4)"></div>
<div class="rh" style="left:-1px;top:691px;width:20px;height:14px;line-height:14px;overflow:hidden;letter-spacing:0.05px;">38</div>
<div style="left:0px;top:722px;width:20px;height:1px;background:linear-gradient(90deg,#dedede,#a4a4a4)"></div>
<div class="rh" style="left:-1px;top:708px;width:20px;height:14px;line-height:14px;overflow:hidden;letter-spacing:0.05px;">39</div>
<div style="left:0px;top:739px;width:20px;height:1px;background:linear-gradient(90deg,#dedede,#a4a4a4)"></div>
<div class="rh" style="left:-1px;top:725px;width:20px;height:14px;line-height:14px;overflow:hidden;letter-spacing:0.05px;">40</div>
<div style="left:0px;top:756px;width:20px;height:1px;background:linear-gradient(90deg,#dedede,#a4a4a4)"></div>
<div class="rh" style="left:-1px;top:742px;width:20px;height:14px;line-height:14px;overflow:hidden;letter-spacing:0.05px;">41</div>
<div style="left:0px;top:773px;width:20px;height:1px;background:linear-gradient(90deg,#dedede,#a4a4a4)"></div>
<div class="rh" style="left:-1px;top:759px;width:20px;height:14px;line-height:14px;overflow:hidden;letter-spacing:0.05px;">42</div>
<div style="left:1896px;top:25px;width:1px;height:739px;background:#9b9b9b"></div>
<div style="left:1897px;top:0px;width:5px;height:765px;background:#e6e6e6"></div>
<div style="left:1900px;top:12px;width:4px;height:32px;background:#fff;border:1px solid #ababab"></div>
<div style="left:1900px;top:26px;width:4px;height:1px;background:#ababab"></div>
<div style="left:1900px;top:750px;width:4px;height:15px;background:#fff;border:1px solid #ababab"></div>
<div style="left:0px;top:764px;width:1902px;height:33px;background:#e6e6e6"></div>
<div style="left:0px;top:764px;width:1902px;height:1px;background:#9b9b9b"></div>
<div style="left:0px;top:792px;width:1902px;height:5px;background:#f3f3f3"></div>
<svg width="6" height="9" viewBox="0 0 6 9" style="left:24.5px;top:772.8px"><path d="M5 0v8.6l-5-4.3z" fill="#c6c6c6"/></svg>
<svg width="6" height="9" viewBox="0 0 6 9" style="left:53.5px;top:772.8px"><path d="M0.5 0v8.6l5-4.3z" fill="#217346"/></svg>
<div style="left:98px;top:764px;width:120px;height:25px;background:#fff;border-left:1px solid #ababab;border-right:1px solid #ababab;border-bottom:2px solid #217346;"></div>
<div style="left:101px;top:767px;width:114px;height:20px;background:linear-gradient(#fff 0%,#f4fbf7 35%,#a9dcc0 100%)"></div>
<div style="left:97.5px;top:767.5px;width:120px;height:20px;font-weight:bold;font-size:13.2px;line-height:20px;text-align:center;color:#217346;letter-spacing:-0.45px;">RAPORT (MAG)</div>
<div class="tab" style="left:220px;top:767px;width:85px;height:22px;color:#fff;background:#0070c0;letter-spacing:-0.09px;text-align:left;padding-left:11.9px;line-height:22px;">Zakupy (2)</div>
<div class="tab" style="left:308px;top:767px;width:55px;height:22px;color:#444;letter-spacing:-0.12px;text-align:left;padding-left:12.2px;line-height:22px;">Ukryj</div>
<div class="tab" style="left:366px;top:767px;width:55px;height:22px;color:#fff;background:#c00000;letter-spacing:-1.31px;text-align:left;padding-left:9.7px;line-height:22px;">FBA_2</div>
<div class="tab" style="left:426px;top:767px;width:78px;height:22px;color:#fff;background:#ff0000;line-height:22px;">Dostawcy</div>
<div class="tab" style="left:509px;top:767px;width:75px;height:22px;color:#fff;background:#0070c0;letter-spacing:0.10px;text-align:left;padding-left:9.8px;line-height:22px;">Parametr</div>
<div class="tab" style="left:587px;top:767px;width:71px;height:22px;color:#444;letter-spacing:-0.25px;text-align:left;padding-left:12.1px;line-height:22px;">Arkusz1</div>
<div class="tab" style="left:659px;top:767px;width:71px;height:22px;color:#444;letter-spacing:-0.28px;text-align:left;padding-left:12.0px;line-height:22px;">Arkusz2</div>
<div class="tab" style="left:733px;top:767px;width:77px;height:22px;color:#000;background:#ffff00;letter-spacing:-0.07px;text-align:left;padding-left:10.4px;line-height:22px;">Wskaźnik</div>
<div class="tab" style="left:815px;top:767px;width:94px;height:22px;color:#fff;background:#ff0000;letter-spacing:-0.02px;text-align:left;padding-left:10.9px;line-height:22px;">Błąd danych</div>
<div class="tab" style="left:914px;top:767px;width:143px;height:22px;color:#fff;background:#0070c0;letter-spacing:-0.07px;text-align:left;padding-left:14.0px;line-height:22px;">Zakupy (z ASINAMI)</div>
<div class="tab" style="left:1062px;top:767px;width:47px;height:22px;color:#fff;background:#0070c0;letter-spacing:-0.81px;text-align:left;padding-left:10.1px;line-height:22px;">IKEA</div>
<div class="tab" style="left:1114px;top:767px;width:60px;height:22px;color:#000;background:#ffc000;letter-spacing:-0.14px;text-align:left;padding-left:9.5px;line-height:22px;">Closed</div>
<div class="tab" style="left:1179px;top:767px;width:81px;height:22px;color:#000;background:#ffc000;letter-spacing:-0.26px;text-align:left;padding-left:10.4px;line-height:22px;">Closed GB</div>
<div class="tab" style="left:1265px;top:767px;width:94px;height:22px;color:#000;background:#ffff00;letter-spacing:0.26px;text-align:left;padding-left:10.7px;line-height:22px;">Modyfikacje</div>
<div class="tab" style="left:1363px;top:767px;width:115px;height:22px;color:#444;letter-spacing:0.05px;text-align:left;padding-left:12.7px;line-height:22px;">Zrzut Amazon1</div>
<div class="tab" style="left:1479px;top:767px;width:139px;height:22px;color:#444;letter-spacing:-0.13px;text-align:left;padding-left:14.9px;line-height:22px;">Historia_wskaźnika</div>
<div class="tsep" style="left:307px;top:769px;width:1px;height:19px;"></div>
<div class="tsep" style="left:363px;top:769px;width:1px;height:19px;"></div>
<div class="tsep" style="left:423px;top:769px;width:1px;height:19px;"></div>
<div class="tsep" style="left:506px;top:769px;width:1px;height:19px;"></div>
<div class="tsep" style="left:586px;top:769px;width:1px;height:19px;"></div>
<div class="tsep" style="left:658px;top:769px;width:1px;height:19px;"></div>
<div class="tsep" style="left:730px;top:769px;width:1px;height:19px;"></div>
<div class="tsep" style="left:812px;top:769px;width:1px;height:19px;"></div>
<div class="tsep" style="left:911px;top:769px;width:1px;height:19px;"></div>
<div class="tsep" style="left:1059px;top:769px;width:1px;height:19px;"></div>
<div class="tsep" style="left:1111px;top:769px;width:1px;height:19px;"></div>
<div class="tsep" style="left:1176px;top:769px;width:1px;height:19px;"></div>
<div class="tsep" style="left:1262px;top:769px;width:1px;height:19px;"></div>
<div class="tsep" style="left:1362px;top:769px;width:1px;height:19px;"></div>
<div class="tsep" style="left:1478px;top:769px;width:1px;height:19px;"></div>
<div class="tsep" style="left:1618px;top:769px;width:1px;height:19px;"></div>
<div class="tab" style="left:1628px;top:768px;width:14px;height:22px;color:#444;">B</div>
<div style="left:1645.7px;top:781px;width:2px;height:2px;background:#217346"></div>
<div style="left:1650px;top:781px;width:2px;height:2px;background:#217346"></div>
<div style="left:1654.3px;top:781px;width:2px;height:2px;background:#217346"></div>
<svg width="18" height="18" viewBox="0 0 18 18" style="left:1669px;top:768.8px"><circle cx="9" cy="9" r="7.6" fill="none" stroke="#6a6a6a" stroke-width="1.2"/><path d="M9 4.5v9M4.5 9h9" stroke="#6a6a6a" stroke-width="1.3"/></svg>
<div style="left:1706px;top:772.7px;width:2px;height:2px;background:#b4b4b4"></div>
<div style="left:1706px;top:777px;width:2px;height:2px;background:#b4b4b4"></div>
<div style="left:1706px;top:781.3px;width:2px;height:2px;background:#b4b4b4"></div>
<div style="left:1723px;top:771px;width:173px;height:15px;background:#f0f0f0"></div>
<div style="left:1723px;top:771px;width:15px;height:15px;background:#fff;border:1px solid #ababab"></div>
<svg width="6" height="8" viewBox="0 0 6 8" style="left:1727.5px;top:774.8px"><path d="M5 0.2v7l-4.6-3.5z" fill="#000"/></svg>
<div style="left:1737px;top:771px;width:109px;height:15px;background:#fff;border:1px solid #ababab"></div>
<div style="left:1880px;top:771px;width:15px;height:15px;background:#fff;border:1px solid #ababab"></div>
<svg width="6" height="8" viewBox="0 0 6 8" style="left:1885.3px;top:774.8px"><path d="M0.6 0.2v7l4.6-3.5z" fill="#000"/></svg>
<div style="left:1624px;top:792px;width:40px;height:5px;background:#d2d2d2"></div>
<div style="left:1637px;top:796px;width:13px;height:1px;background:#444"></div>
<div style="left:1677px;top:796px;width:13px;height:1px;background:#444"></div>
<div style="left:1717px;top:796px;width:13px;height:1px;background:#444"></div>
</div></body></html>
